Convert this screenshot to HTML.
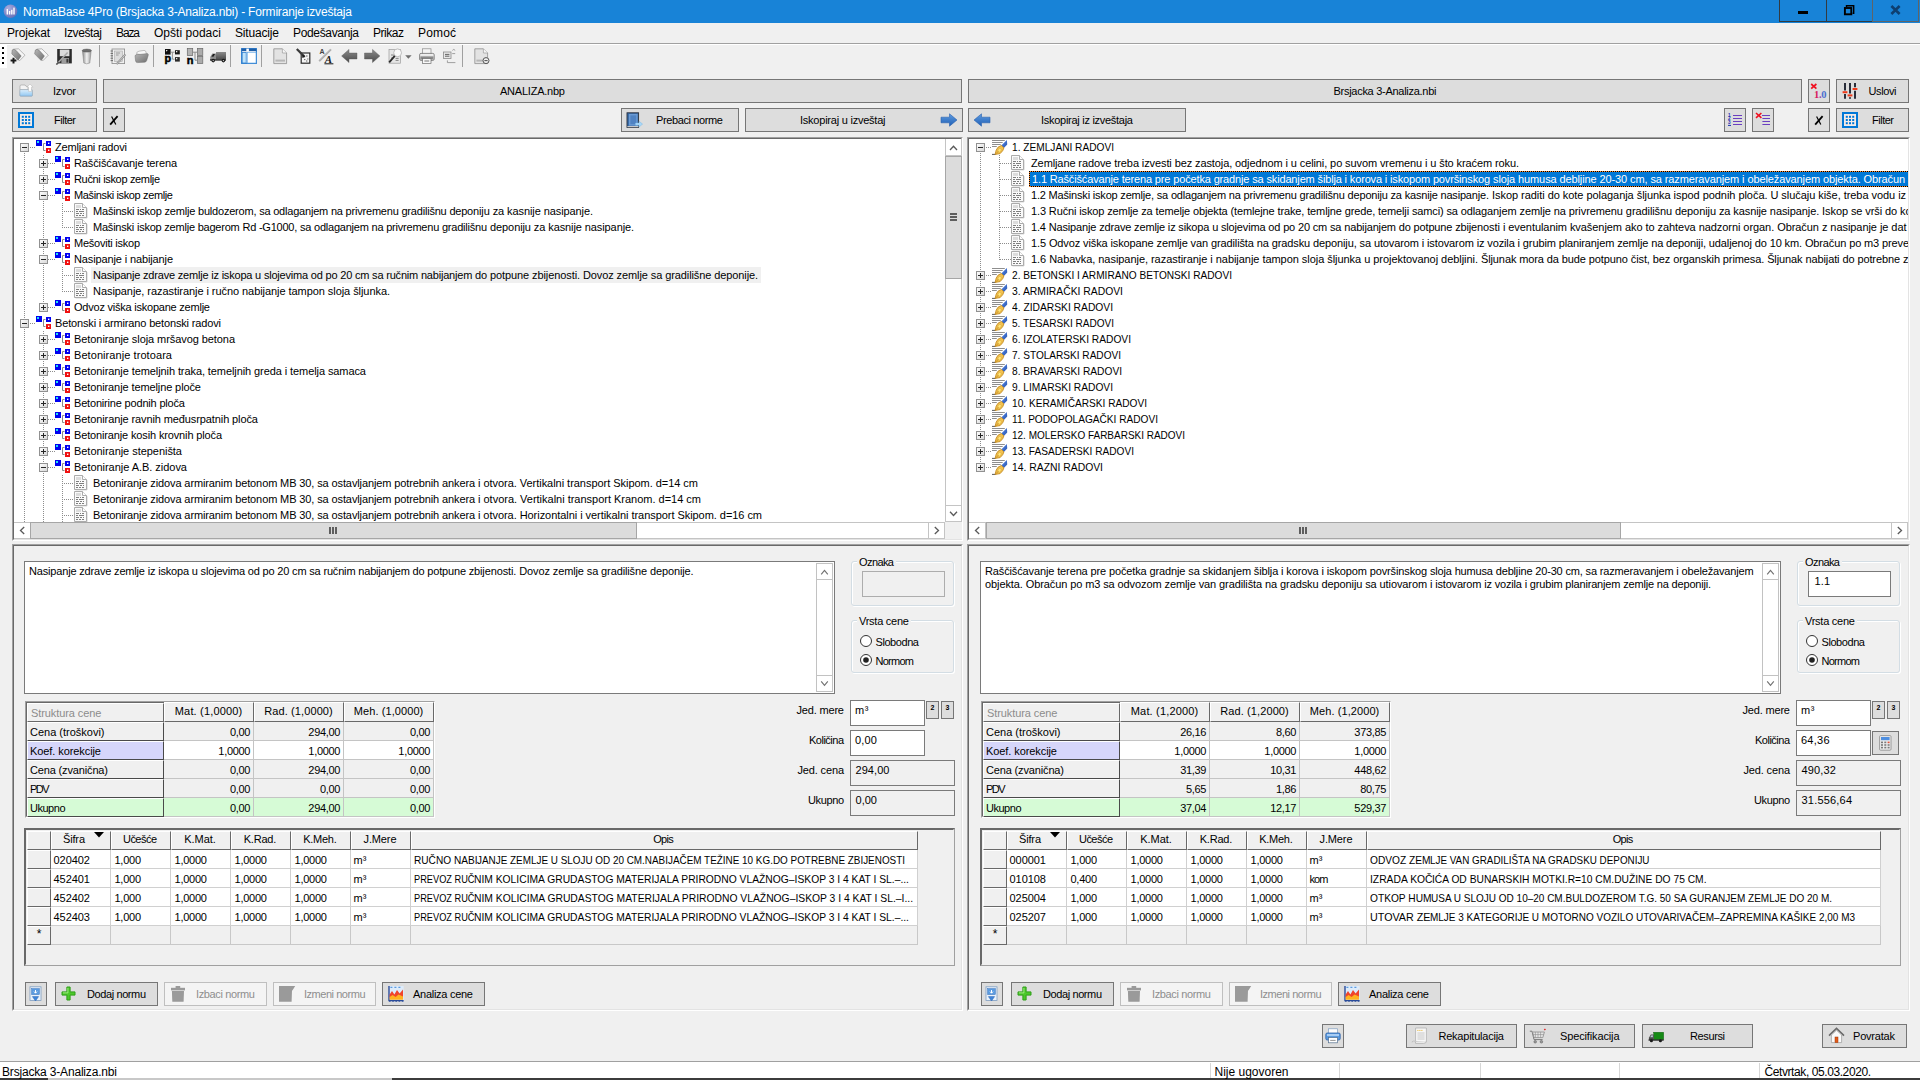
<!DOCTYPE html>
<html><head><meta charset="utf-8"><title>NormaBase 4Pro</title>
<style>
html,body{margin:0;padding:0;background:#F0F0F0;font-family:"Liberation Sans",sans-serif;}
body{width:1920px;height:1080px;overflow:hidden;font-family:"Liberation Sans",sans-serif;font-size:11px;color:#000;}
#root{position:relative;width:1920px;height:1080px;overflow:hidden;background:#F0F0F0;}
.a{position:absolute;box-sizing:border-box;}
.t{white-space:pre;overflow:visible;}
.btn{background:#DDDDDD;border:1px solid #767676;}
.btnd{background:#F4F4F4;border:1px solid #BFBFBF;}
.sunk{border-style:solid;border-width:2px;border-color:#828282 #fff #fff #828282;}
.clip{overflow:hidden;}
svg{position:absolute;overflow:visible;}

</style></head>
<body>
<svg width="0" height="0" style="position:absolute"><defs>
<linearGradient id="gbx" x1="0" y1="0" x2="1" y2="1"><stop offset="0" stop-color="#FFFFFF"/><stop offset="1" stop-color="#D6D6D6"/></linearGradient>
<g id="ifold">
 <rect x="0" y="1" width="6" height="6" fill="#0000F0"/><rect x="1" y="2" width="2" height="2" fill="#20E0F0"/>
 <path d="M9.5 4.5 H7.5 V11.5 H9.5" fill="none" stroke="#8A8A8A" stroke-width="1"/>
 <rect x="10" y="2" width="5" height="5" fill="#0000F0"/><rect x="12" y="3.6" width="1.4" height="1.4" fill="#fff"/>
 <rect x="10" y="9" width="5" height="5" fill="#F01010"/><rect x="12" y="10.6" width="1.4" height="1.4" fill="#fff"/>
</g>
<g id="idoc">
 <path d="M1.5 14.9 H13 V5.2" fill="none" stroke="#CFCFCF" stroke-width="1"/>
 <path d="M.5 .5 H8.5 L12.5 4.5 V14.5 H.5 Z" fill="#FAFAFA" stroke="#ABABAB" stroke-width="1"/>
 <path d="M8.5 .5 V4.5 H12.5" fill="#fff" stroke="#ABABAB" stroke-width="1"/>
 <rect x="2" y="2" width="5" height="3" fill="#DCDCDC"/>
 <path d="M2 6.5 H5 M6 6.5 H7 M8 6.5 H10 M2 8.5 H4 M5 8.5 H10 M2 10.5 H5 M6 10.5 H8 M9 10.5 H10 M2 12.5 H4 M5 12.5 H7 M8 12.5 H10" stroke="#7E7E7E" stroke-width="1" shape-rendering="crispEdges"/>
</g>
<g id="ipen">
 <path d="M0 1.5 H12.8 M0 3.5 H10.7 M0 5.5 H8.7 M0 7.5 H4.8" stroke="#8E8E8E" stroke-width="1"/>
 <path d="M0 15.4 H3.8" stroke="#5A5A5A" stroke-width="1"/>
 <path d="M14.9 1.1 L15.2 5.6 L11.9 9 L9.2 6.5 Z" fill="url(#gpen)"/>
 <path d="M9.3 6.5 L6 8.2 L4.2 11.2 L3.1 15.4 L8.1 14.6 L10.7 11.7 L11.9 8.9 Z" fill="#F2C252" stroke="#C48A1E" stroke-width=".9" stroke-linejoin="round"/>
 <ellipse cx="7.5" cy="11.3" rx="2.1" ry="1.5" transform="rotate(-48 7.5 11.3)" fill="#FFE67A" stroke="#D9A42E" stroke-width=".5"/>
 <path d="M3.6 14.9 L6.6 12.2" stroke="#B77F16" stroke-width=".6"/>
</g>
<linearGradient id="gpen" x1="0" y1="0" x2="1" y2="1"><stop offset="0" stop-color="#7FA6EC"/><stop offset=".5" stop-color="#3F6FCC"/><stop offset="1" stop-color="#2A54A8"/></linearGradient>
</defs></svg>

<div id="root">
<div class="a " style="left:0px;top:0px;width:1920px;height:23px;background:#1883D7;"></div>
<svg class="a" style="left:3px;top:4px" width="15" height="15" viewBox="0 0 15 15"><defs><radialGradient id="gi" cx="35%" cy="30%" r="75%"><stop offset="0" stop-color="#A9AEE0"/><stop offset="1" stop-color="#6670B8"/></radialGradient></defs><circle cx="7.5" cy="7.2" r="6.8" fill="url(#gi)"/><rect x="3.6" y="5" width="1.4" height="5.5" fill="#fff"/><rect x="5.9" y="7" width="1.4" height="3.5" fill="#fff"/><rect x="8.1" y="5.8" width="1.4" height="4.7" fill="#fff"/><rect x="10.3" y="3.6" width="1.4" height="6.9" fill="#fff"/></svg>
<div class="a t " style="left:23px;top:1px;font-size:12px;line-height:23px;height:23px;letter-spacing:-0.182px;color:#fff;">NormaBase 4Pro (Brsjacka 3-Analiza.nbi) - Formiranje izveštaja</div>
<div class="a " style="left:1779px;top:0px;width:48px;height:22px;border:1px solid #333A40;border-top:none;"></div>
<div class="a " style="left:1826px;top:0px;width:47px;height:22px;border:1px solid #333A40;border-top:none;"></div>
<div class="a " style="left:1872px;top:0px;width:47px;height:22px;border:1px solid #5F6468;border-top:none;"></div>
<div class="a " style="left:1798px;top:11px;width:10px;height:3px;background:#000;"></div>
<svg class="a" style="left:1843px;top:4px" width="13" height="13" viewBox="0 0 13 13"><path d="M3.5 3 V1.8 H10.7 V9.3 H9.6" fill="none" stroke="#000" stroke-width="1.4"/><rect x="1.9" y="4" width="6.4" height="6.3" fill="none" stroke="#000" stroke-width="1.9"/></svg>
<svg class="a" style="left:1890px;top:5px" width="11" height="10" viewBox="0 0 11 10"><path d="M1.4 1 L9.6 9 M9.6 1 L1.4 9" stroke="#0E3F70" stroke-width="2.6"/></svg>
<div class="a " style="left:0px;top:43px;width:1920px;height:1px;background:#A0A0A0;"></div>
<div class="a " style="left:0px;top:44px;width:1920px;height:1px;background:#fff;"></div>
<div class="a t " style="left:7px;top:23px;font-size:12px;line-height:20px;height:20px;letter-spacing:-0.147px;">Projekat</div>
<div class="a t " style="left:64px;top:23px;font-size:12px;line-height:20px;height:20px;letter-spacing:-0.384px;">Izveštaj</div>
<div class="a t " style="left:116px;top:23px;font-size:12px;line-height:20px;height:20px;letter-spacing:-1.12px;">Baza</div>
<div class="a t " style="left:154px;top:23px;font-size:12px;line-height:20px;height:20px;letter-spacing:0.027px;">Opšti podaci</div>
<div class="a t " style="left:235px;top:23px;font-size:12px;line-height:20px;height:20px;letter-spacing:-0.17px;">Situacije</div>
<div class="a t " style="left:293px;top:23px;font-size:12px;line-height:20px;height:20px;letter-spacing:-0.339px;">Podešavanja</div>
<div class="a t " style="left:373px;top:23px;font-size:12px;line-height:20px;height:20px;letter-spacing:-0.469px;">Prikaz</div>
<div class="a t " style="left:418px;top:23px;font-size:12px;line-height:20px;height:20px;letter-spacing:0.16px;">Pomoć</div>
<div class="a " style="left:0px;top:45px;width:7px;height:23px;background:#fff;"></div>
<div class="a " style="left:2px;top:47px;width:2px;height:2px;background:#000;"></div>
<div class="a " style="left:2px;top:52px;width:2px;height:2px;background:#000;"></div>
<div class="a " style="left:2px;top:57px;width:2px;height:2px;background:#000;"></div>
<div class="a " style="left:2px;top:62px;width:2px;height:2px;background:#000;"></div>
<div class="a " style="left:99px;top:45px;width:1px;height:22px;background:#A0A0A0;"></div>
<div class="a " style="left:153px;top:45px;width:1px;height:22px;background:#A0A0A0;"></div>
<div class="a " style="left:230px;top:45px;width:1px;height:22px;background:#A0A0A0;"></div>
<div class="a " style="left:261px;top:45px;width:1px;height:22px;background:#A0A0A0;"></div>
<div class="a " style="left:462px;top:45px;width:1px;height:22px;background:#A0A0A0;"></div>
<svg class="a" style="left:0;top:45px" width="500" height="23" viewBox="0 0 500 23">
<defs>
<linearGradient id="tg1" x1="0" y1="0" x2="1" y2="1"><stop offset="0" stop-color="#B8B8B8"/><stop offset="1" stop-color="#6E6E6E"/></linearGradient>
<linearGradient id="tg2" x1="0" y1="0" x2="1" y2="0"><stop offset="0" stop-color="#8A8A8A"/><stop offset=".5" stop-color="#F2F2F2"/><stop offset="1" stop-color="#9A9A9A"/></linearGradient>
<linearGradient id="tg3" x1="0" y1="0" x2="0" y2="1"><stop offset="0" stop-color="#8C8C8C"/><stop offset="1" stop-color="#4A4A4A"/></linearGradient>
<linearGradient id="tg4" x1="0" y1="0" x2="0" y2="1"><stop offset="0" stop-color="#F4F4F4"/><stop offset="1" stop-color="#CFCFCF"/></linearGradient>
</defs>
<!-- 1 tag+ -->
<g transform="translate(10,3)"><path d="M3.5 1.2 L8.5 0.8 L15 7.2 L9.5 12.8 L3 6.2 Z" fill="#F6F6F6" stroke="#9A9A9A" stroke-width=".7"/><path d="M2.2 2 Q3.6 0.2 6.2 2.6 L11.2 8 L8 12.2 L1.8 5.8 Z" fill="url(#tg1)" stroke="#6A6A6A" stroke-width=".5"/><path d="M0.6 12.6 H6.4 M3.5 9.8 V15.6" stroke="#1A1A1A" stroke-width="2"/></g>
<!-- 2 tag -->
<g transform="translate(33,3)"><path d="M3.8 1.2 L8.8 0.8 L15.3 7.2 L9.8 12.8 L3.3 6.2 Z" fill="#F6F6F6" stroke="#9A9A9A" stroke-width=".7"/><path d="M2.4 2 Q3.8 0.2 6.4 2.6 L11.4 8 L8.2 12.6 L1.6 5.8 Z" fill="url(#tg1)" stroke="#6A6A6A" stroke-width=".5"/></g>
<!-- 3 floppy -->
<g transform="translate(56,3)"><rect x="1.2" y="1" width="14.6" height="14.4" fill="#2B2B2B"/><rect x="3.8" y="1.6" width="9.6" height="6.6" fill="#DADADA"/><rect x="5.4" y="10" width="7.6" height="5.4" fill="#9C9C9C"/><rect x="10.4" y="10.8" width="2" height="3.8" fill="#3A3A3A"/><path d="M0.4 16.6 L11.6 4.4" stroke="#A8A8A8" stroke-width="1.5"/><path d="M0.4 16.6 L3 14" stroke="#555" stroke-width="1.4"/></g>
<!-- 4 trash -->
<g transform="translate(81,3)"><path d="M1.4 2.6 L2.8 15 Q5.6 16.6 8.8 15 L10.2 2.6 Z" fill="url(#tg2)" stroke="#7A7A7A" stroke-width=".5"/><ellipse cx="5.8" cy="2.6" rx="4.5" ry="1.5" fill="#6E6E6E" stroke="#555" stroke-width=".5"/></g>
<!-- 5 notepad -->
<g transform="translate(110,3)"><rect x="2" y="1" width="12.6" height="14.6" fill="#F0F0F0" stroke="#8A8A8A" stroke-width=".8"/><rect x="4.4" y="3" width="8" height="10.6" fill="#DCDCDC" stroke="#A0A0A0" stroke-width=".5"/><path d="M0.6 3 H3 M0.6 5.4 H3 M0.6 7.8 H3 M0.6 10.2 H3 M0.6 12.6 H3" stroke="#6A6A6A" stroke-width="1"/><path d="M6 5 H10 M6 7 H8.6" stroke="#8A8A8A" stroke-width=".8"/><path d="M6.6 16.2 L15.4 6.4" stroke="#8A8A8A" stroke-width="2"/><path d="M6.6 16.2 L15.4 6.4" stroke="#D6D6D6" stroke-width=".8"/></g>
<!-- 6 folder -->
<g transform="translate(134,4)"><path d="M2.6 5.4 Q2 2.6 5 2.2 L10 1.4 Q11.6 1.4 12 3 L12.6 6 Z" fill="#F8F8F8" stroke="#9A9A9A" stroke-width=".6"/><path d="M1 6.6 Q3 4.4 6 5.4 L13.4 4.6 Q14.6 4.8 14.2 6.4 L12.6 11.8 Q12 13.2 10.6 13.2 L3.4 13.6 Q2 13.6 1.6 12 Z" fill="url(#tg1)" stroke="#6E6E6E" stroke-width=".5"/></g>
<!-- 7 P-tree -->
<g transform="translate(164,3)"><rect x="1" y="1" width="5.6" height="5.6" fill="#111"/><path d="M2 3.8 V2 H3.8 Z" fill="#E8E8E8"/><rect x="11" y="2.2" width="4.8" height="4.2" fill="#161616"/><rect x="12" y="3" width="1.3" height="1.3" fill="#F0F0F0"/><rect x="11" y="9.1" width="4.8" height="4.5" fill="#2A2A2A"/><rect x="12" y="10" width="1.3" height="1.3" fill="#E0E0E0"/><path d="M10.6 4.2 H8.4 V11.2 H10.6 M6.8 4.2 H8.4" fill="none" stroke="#8A8A8A" stroke-width=".9"/><text x=".5" y="13.7" font-family="Liberation Sans" font-weight="bold" font-size="10.8" fill="#000" stroke="#000" stroke-width=".5">p</text></g>
<!-- 8 n -->
<g transform="translate(187,3)"><rect x=".3" y=".4" width="5.4" height="7.2" fill="#B4B4B4" stroke="#6A6A6A" stroke-width=".7"/><rect x="10.4" y=".4" width="5.4" height="7.2" fill="#ABABAB" stroke="#6A6A6A" stroke-width=".7"/><rect x="10.4" y="8.4" width="5.4" height="7.2" fill="#ABABAB" stroke="#6A6A6A" stroke-width=".7"/><path d="M5.8 4.2 H10.4 M8 4.2 V12.2 H10.4" fill="none" stroke="#8A8A8A" stroke-width="1"/><text x="-.3" y="15.7" font-family="Liberation Sans" font-weight="bold" font-size="11" fill="#000" stroke="#000" stroke-width=".5">n</text></g>
<!-- 9 truck -->
<g transform="translate(209,5)"><rect x="7" y="2" width="10" height="7.8" fill="url(#tg3)"/><path d="M1.2 10 V7 L3.4 3.6 H7 V10 Z" fill="#8C8C8C"/><path d="M2.4 6.6 L4.2 4 H6 L4.4 6.8 Z" fill="#1A1A1A"/><rect x="1" y="9.2" width="16" height="1.5" fill="#3A3A3A"/><circle cx="4.2" cy="10.6" r="1.8" fill="#1A1A1A"/><circle cx="4.2" cy="10.6" r=".7" fill="#CCC"/><circle cx="14.4" cy="10.6" r="1.8" fill="#1A1A1A"/><circle cx="14.4" cy="10.6" r=".7" fill="#CCC"/></g>
<!-- 10 layout -->
<g transform="translate(241,3)"><rect x=".6" y=".6" width="14.8" height="14.8" fill="#fff" stroke="#2F7FD0" stroke-width="1.1"/><rect x=".6" y=".6" width="14.8" height="2.6" fill="#1F5FA8"/><rect x="1.2" y="4.4" width="4" height="10.6" fill="#BFE3FA" stroke="#2F7FD0" stroke-width=".8"/><path d="M6.6 .6 V3.4" stroke="#fff" stroke-width="2.6"/><rect x="6.4" y="4.4" width="8.6" height="10.6" fill="#fff" stroke="#5FA6E4" stroke-width=".6"/></g>
<!-- 11 page -->
<g transform="translate(273,3)"><path d="M.8 .8 H9.4 L13.6 5 V15.6 H.8 Z" fill="#E3E3E3" stroke="#8E8E8E" stroke-width=".8"/><path d="M9.4 .8 V5 H13.6" fill="#F6F6F6" stroke="#8E8E8E" stroke-width=".6"/><rect x="2.4" y="11.6" width="9.6" height="2" fill="#B6B6B6"/></g>
<!-- 12 -->
<g transform="translate(296,3)"><rect x="5.2" y="5" width="8.6" height="10.2" fill="#F4F4F4" stroke="#2A2A2A" stroke-width="1.2"/><path d="M.8 1 L8.4 8.6" stroke="#3A3A3A" stroke-width="2.2"/><path d="M6 9.8 L9.6 9 L6.8 6.4Z" fill="#1A1A1A"/><path d="M10 8 h1.6 M8 11.6 h1.4 M11.2 11 h1.2 M10 13 h1.4" stroke="#555" stroke-width=".9"/></g>
<!-- 13 A/A -->
<g transform="translate(318,3)"><path d="M1.2 13.2 L13 1.4" stroke="#9A9A9A" stroke-width="1.8"/><path d="M1.2 13.2 L13 1.4" stroke="#E4E4E4" stroke-width=".6"/><text x="1.6" y="6.4" font-family="Liberation Sans" font-weight="bold" font-size="7" fill="#444">A</text><text x="6.8" y="14.6" font-family="Liberation Serif" font-style="italic" font-weight="bold" font-size="11" fill="#1A1A1A">A</text><path d="M6.4 15.8 H15.4" stroke="#1A1A1A" stroke-width="1"/></g>
<!-- 14 left arrow -->
<g transform="translate(341,3)"><path d="M.6 8 L8 1.4 V5 H16 V11 H8 V14.6 Z" fill="url(#tg3)" stroke="#555" stroke-width=".4"/></g>
<!-- 15 right arrow -->
<g transform="translate(363.5,3)"><path d="M16.4 8 L9 1.4 V5 H1 V11 H9 V14.6 Z" fill="url(#tg3)" stroke="#555" stroke-width=".4"/></g>
<!-- 16 zoom -->
<g transform="translate(388,3)"><rect x="1" y="1.6" width="11.4" height="13.6" fill="#E6E6E6" stroke="#9C9C9C" stroke-width=".7"/><path d="M3 7 h3 M3 10 h2 M7.6 12.4 h3 M7.6 10.4 h3" stroke="#7A7A7A" stroke-width=".9"/><circle cx="9.6" cy="4.8" r="3.9" fill="#FAFAFA" stroke="#BDBDBD" stroke-width="1"/><path d="M6.8 7.8 L1.2 14.4" stroke="#2A2A2A" stroke-width="1.8"/><path d="M17.2 7.2 H23.6 L20.4 10.8 Z" fill="#6E6E6E"/></g>
<!-- 17 printer -->
<g transform="translate(419,3)"><rect x="3.6" y=".8" width="8.4" height="5.6" fill="#F4F4F4" stroke="#8A8A8A" stroke-width=".7"/><rect x=".6" y="5.4" width="14.6" height="7" rx="1.4" fill="url(#tg4)" stroke="#6E6E6E" stroke-width=".8"/><rect x="1.4" y="8.4" width="13" height="3" fill="#8A8A8A"/><rect x="3.6" y="10.6" width="8.4" height="4.8" fill="#F8F8F8" stroke="#6E6E6E" stroke-width=".7"/><path d="M5.4 13 H10.2" stroke="#555" stroke-width=".8"/></g>
<!-- 18 small -->
<g transform="translate(442,4)"><rect x="1.4" y="3" width="7.6" height="6.4" fill="#E8E8E8" stroke="#8A8A8A" stroke-width=".8"/><path d="M3 5.4 h4.4 M3 7.2 h4.4" stroke="#555" stroke-width=".9"/><path d="M10.4 1.4 l1.4 -1 l1.4 1 M10.2 4.6 h3 M5.4 11.4 V13.6 H13.4" stroke="#8A8A8A" stroke-width=".8" fill="none"/></g>
<!-- 19 page circle -->
<g transform="translate(474,3)"><path d="M.8 .8 H9.4 L13.6 5 V15.6 H.8 Z" fill="#E3E3E3" stroke="#8E8E8E" stroke-width=".8"/><path d="M9.4 .8 V5 H13.6" fill="#F6F6F6" stroke="#8E8E8E" stroke-width=".6"/><rect x="2.4" y="11.6" width="7" height="2" fill="#B6B6B6"/><circle cx="12" cy="12.6" r="3" fill="#F0F0F0" stroke="#555" stroke-width="1"/><path d="M10.4 12.6 H13.6" stroke="#555" stroke-width="1.1"/></g>
</svg>

<div class="a btn" style="left:12px;top:79px;width:85px;height:24px;"></div>
<div class="a t " style="left:53px;top:79px;font-size:11px;line-height:24px;height:24px;letter-spacing:-0.211px;">Izvor</div>
<div class="a btn" style="left:103px;top:79px;width:859px;height:24px;"></div>
<div class="a t " style="left:500.0px;top:79px;font-size:11px;line-height:24px;height:24px;letter-spacing:-0.227px;">ANALIZA.nbp</div>
<div class="a btn" style="left:968px;top:79px;width:834px;height:24px;"></div>
<div class="a t " style="left:1333.5px;top:79px;font-size:11px;line-height:24px;height:24px;letter-spacing:-0.278px;">Brsjacka 3-Analiza.nbi</div>
<div class="a btn" style="left:1808px;top:79px;width:22px;height:24px;"></div>
<div class="a btn" style="left:1836px;top:79px;width:73px;height:24px;"></div>
<div class="a t " style="left:1868.5px;top:79px;font-size:11px;line-height:24px;height:24px;letter-spacing:-0.391px;">Uslovi</div>
<div class="a btn" style="left:12px;top:108px;width:85px;height:24px;"></div>
<div class="a t " style="left:54px;top:108px;font-size:11px;line-height:24px;height:24px;letter-spacing:-0.491px;">Filter</div>
<div class="a btn" style="left:103px;top:108px;width:22px;height:24px;"></div>
<div class="a btn" style="left:621px;top:108px;width:118px;height:24px;"></div>
<div class="a t " style="left:656px;top:108px;font-size:11px;line-height:24px;height:24px;letter-spacing:-0.379px;">Prebaci norme</div>
<div class="a btn" style="left:745px;top:108px;width:218px;height:24px;"></div>
<div class="a t " style="left:800px;top:108px;font-size:11px;line-height:24px;height:24px;letter-spacing:-0.23px;">Iskopiraj u izveštaj</div>
<div class="a btn" style="left:968px;top:108px;width:218px;height:24px;"></div>
<div class="a t " style="left:1041px;top:108px;font-size:11px;line-height:24px;height:24px;letter-spacing:-0.278px;">Iskopiraj iz izveštaja</div>
<div class="a btn" style="left:1724px;top:108px;width:22px;height:24px;"></div>
<div class="a btn" style="left:1752px;top:108px;width:22px;height:24px;"></div>
<div class="a btn" style="left:1808px;top:108px;width:22px;height:24px;"></div>
<div class="a btn" style="left:1836px;top:108px;width:73px;height:24px;"></div>
<div class="a t " style="left:1872px;top:108px;font-size:11px;line-height:24px;height:24px;letter-spacing:-0.491px;">Filter</div>
<svg class="a" style="left:109px;top:115px" width="10" height="11" viewBox="0 0 10 11"><path d="M1.2 9.6 L8.6 1.2" stroke="#000" stroke-width="1.8"/><path d="M2.6 1.4 L6.8 9.6" stroke="#000" stroke-width="1.2"/></svg>
<svg class="a" style="left:1814px;top:115px" width="10" height="11" viewBox="0 0 10 11"><path d="M1.2 9.6 L8.6 1.2" stroke="#000" stroke-width="1.8"/><path d="M2.6 1.4 L6.8 9.6" stroke="#000" stroke-width="1.2"/></svg>
<svg class="a" style="left:18px;top:112px" width="16" height="16" viewBox="0 0 16 16"><rect x="1" y="1" width="14" height="14" fill="#F3EAE6" stroke="#0078D7" stroke-width="2"/><rect x="3.8" y="3.8" width="2" height="2" fill="#0078D7"/><rect x="3.8" y="7" width="2" height="2" fill="#0078D7"/><rect x="3.8" y="10.2" width="2" height="2" fill="#0078D7"/><rect x="7" y="3.8" width="2" height="2" fill="#0078D7"/><rect x="7" y="7" width="2" height="2" fill="#0078D7"/><rect x="7" y="10.2" width="2" height="2" fill="#0078D7"/><rect x="10.2" y="3.8" width="2" height="2" fill="#0078D7"/><rect x="10.2" y="7" width="2" height="2" fill="#0078D7"/><rect x="10.2" y="10.2" width="2" height="2" fill="#0078D7"/></svg>
<svg class="a" style="left:1842px;top:112px" width="16" height="16" viewBox="0 0 16 16"><rect x="1" y="1" width="14" height="14" fill="#F3EAE6" stroke="#0078D7" stroke-width="2"/><rect x="3.8" y="3.8" width="2" height="2" fill="#0078D7"/><rect x="3.8" y="7" width="2" height="2" fill="#0078D7"/><rect x="3.8" y="10.2" width="2" height="2" fill="#0078D7"/><rect x="7" y="3.8" width="2" height="2" fill="#0078D7"/><rect x="7" y="7" width="2" height="2" fill="#0078D7"/><rect x="7" y="10.2" width="2" height="2" fill="#0078D7"/><rect x="10.2" y="3.8" width="2" height="2" fill="#0078D7"/><rect x="10.2" y="7" width="2" height="2" fill="#0078D7"/><rect x="10.2" y="10.2" width="2" height="2" fill="#0078D7"/></svg>
<svg class="a" style="left:19px;top:83px" width="15" height="15" viewBox="0 0 15 15"><defs><linearGradient id="gf" x1="0" y1="0" x2="0" y2="1"><stop offset="0" stop-color="#DDEFFC"/><stop offset="1" stop-color="#8FC6F2"/></linearGradient></defs><path d="M1 3.2 Q1 2 2.2 2 H6 L7.2 3.4 H9 V7 H1 Z" fill="#F4F4F4" stroke="#9A9A9A" stroke-width=".6"/><rect x=".8" y="6.6" width="12.6" height="6.6" rx=".8" fill="url(#gf)" stroke="#8A9AA8" stroke-width=".6"/><path d="M11 1 L14 4.2 H12.4 V8.4 H9.6 V4.2 H8 Z" fill="#fff" stroke="#B5B5B5" stroke-width=".5"/></svg>
<svg class="a" style="left:940px;top:113px" width="18" height="14" viewBox="0 0 18 14"><defs><linearGradient id="ga" x1="0" y1="0" x2="0" y2="1"><stop offset="0" stop-color="#5E9BE0"/><stop offset="1" stop-color="#1F5FB5"/></linearGradient></defs><path d="M1 4.2 H9.5 V.8 L17 7 L9.5 13.2 V9.8 H1 Z" fill="url(#ga)" stroke="#2A62B0" stroke-width=".6"/></svg>
<svg class="a" style="left:973px;top:113px" width="18" height="14" viewBox="0 0 18 14"><path d="M17 4.2 H8.5 V.8 L1 7 L8.5 13.2 V9.8 H17 Z" fill="url(#ga)" stroke="#2A62B0" stroke-width=".6"/></svg>
<svg class="a" style="left:626px;top:112px" width="18" height="17" viewBox="0 0 18 17"><rect x="1" y=".8" width="11.6" height="14.6" fill="#3A6CA8" stroke="#2A2F3A" stroke-width=".9"/><rect x="3" y="2" width="8.6" height="11.6" fill="#6A9AD4"/><rect x="4.4" y="3.4" width="5.8" height="8.8" fill="#4F82C2"/><path d="M1.4 14.6 H12.4" stroke="#C8C8C8" stroke-width="1.2"/><path d="M9.4 11 h3.6 v-1.8 l3.6 2.9 l-3.6 2.9 v-1.8 h-3.6z" fill="#A8D8F8" stroke="#6FB0E4" stroke-width=".4"/></svg>
<svg class="a" style="left:1810px;top:82px" width="18" height="18" viewBox="0 0 18 18"><path d="M1.2 2 L6.4 6.6 M6.4 2 L1.2 6.6" stroke="#F01020" stroke-width="1.7"/><text x="4" y="15.6" font-family="Liberation Serif" font-weight="bold" font-size="10.5" fill="#D81B60">1</text><text x="9" y="15.6" font-family="Liberation Serif" font-weight="bold" font-size="10.5" fill="#8E44AD">.</text><text x="11.2" y="15.6" font-family="Liberation Serif" font-weight="bold" font-size="10.5" fill="#4A6FD0">0</text></svg>
<svg class="a" style="left:1842px;top:82px" width="16" height="18" viewBox="0 0 16 18"><g stroke="#2A2E3A" stroke-width="2"><path d="M3 1 V8.4 M3 12 V16.8"/><path d="M8 1 V11.6 M8 15.2 V16.8"/><path d="M13 1 V5.2 M13 8.8 V16.8"/></g><g fill="#F03A1A"><rect x=".6" y="9.2" width="4.8" height="2"/><rect x="5.6" y="12.4" width="4.8" height="2"/><rect x="10.6" y="6" width="4.8" height="2"/></g></svg>
<svg class="a" style="left:1726px;top:111px" width="18" height="18" viewBox="0 0 18 18"><g stroke="#6A3FC0" stroke-width="1"><path d="M7 4.5 H16 M7 7.5 H16 M7 10.5 H16 M7 13.5 H16"/></g><g fill="#1A2FB0" font-family="Liberation Sans" font-size="4.6" font-weight="bold"><text x="2" y="5.6">1</text><text x="2" y="9.4">2</text><text x="2" y="13.2">3</text></g><path d="M2 14.4 h3" stroke="#1A2FB0" stroke-width="1"/></svg>
<svg class="a" style="left:1754px;top:111px" width="18" height="18" viewBox="0 0 18 18"><path d="M2 2 L7.4 6.8 M7.4 2 L2 6.8" stroke="#F01020" stroke-width="1.6"/><g stroke="#6A3FC0" stroke-width="1"><path d="M8 4.5 H16 M8.4 7.5 H16 M8.4 10.5 H16 M8.4 13.5 H16"/></g></svg>
<div class="a " style="left:12px;top:137px;width:951px;height:404px;background:#fff;border-style:solid;border-width:1px;border-color:#A0A0A0 #fff #fff #A0A0A0;"></div>
<div class="a " style="left:13px;top:138px;width:949px;height:402px;border-style:solid;border-width:1px;border-color:#696969 #E3E3E3 #E3E3E3 #696969;"></div>
<div class="a clip" style="left:14px;top:139px;width:931px;height:383px;">
<div class="a " style="left:10px;top:14px;width:1px;height:166px;background:repeating-linear-gradient(to bottom,#8C8C8C 0 1px,transparent 1px 2px);"></div>
<div class="a " style="left:10px;top:190px;width:1px;height:194px;background:repeating-linear-gradient(to bottom,#8C8C8C 0 1px,transparent 1px 2px);"></div>
<div class="a " style="left:29px;top:16px;width:1px;height:148px;background:repeating-linear-gradient(to bottom,#8C8C8C 0 1px,transparent 1px 2px);"></div>
<div class="a " style="left:29px;top:192px;width:1px;height:192px;background:repeating-linear-gradient(to bottom,#8C8C8C 0 1px,transparent 1px 2px);"></div>
<div class="a " style="left:48px;top:64px;width:1px;height:25px;background:repeating-linear-gradient(to bottom,#8C8C8C 0 1px,transparent 1px 2px);"></div>
<div class="a " style="left:48px;top:128px;width:1px;height:25px;background:repeating-linear-gradient(to bottom,#8C8C8C 0 1px,transparent 1px 2px);"></div>
<div class="a " style="left:48px;top:336px;width:1px;height:48px;background:repeating-linear-gradient(to bottom,#8C8C8C 0 1px,transparent 1px 2px);"></div>
<div class="a " style="left:77px;top:128px;width:670px;height:16px;background:#F0F0F0;"></div>
<div class="a " style="left:16px;top:8px;width:6px;height:1px;background:repeating-linear-gradient(to right,#8C8C8C 0 1px,transparent 1px 2px);"></div>
<svg class="a" style="left:6px;top:4px" width="9" height="9" viewBox="0 0 9 9"><defs></defs><rect x=".5" y=".5" width="8" height="8" fill="url(#gbx)" stroke="#919191"/><path d="M2 4.5 H7" stroke="#262626" stroke-width="1"/></svg>
<svg class="a" style="left:22px;top:0px" width="16" height="16"><use href="#ifold"/></svg>
<div class="a t " style="left:41px;top:0px;font-size:11px;line-height:16px;height:16px;letter-spacing:-0.185px;">Zemljani radovi</div>
<div class="a " style="left:34px;top:24px;width:7px;height:1px;background:repeating-linear-gradient(to right,#8C8C8C 0 1px,transparent 1px 2px);"></div>
<svg class="a" style="left:25px;top:20px" width="9" height="9" viewBox="0 0 9 9"><defs></defs><rect x=".5" y=".5" width="8" height="8" fill="url(#gbx)" stroke="#919191"/><path d="M2 4.5 H7" stroke="#262626" stroke-width="1"/><path d="M4.5 2 V7" stroke="#262626" stroke-width="1"/></svg>
<svg class="a" style="left:41px;top:16px" width="16" height="16"><use href="#ifold"/></svg>
<div class="a t " style="left:60px;top:16px;font-size:11px;line-height:16px;height:16px;letter-spacing:-0.114px;">Raščišćavanje terena</div>
<div class="a " style="left:34px;top:40px;width:7px;height:1px;background:repeating-linear-gradient(to right,#8C8C8C 0 1px,transparent 1px 2px);"></div>
<svg class="a" style="left:25px;top:36px" width="9" height="9" viewBox="0 0 9 9"><defs></defs><rect x=".5" y=".5" width="8" height="8" fill="url(#gbx)" stroke="#919191"/><path d="M2 4.5 H7" stroke="#262626" stroke-width="1"/><path d="M4.5 2 V7" stroke="#262626" stroke-width="1"/></svg>
<svg class="a" style="left:41px;top:32px" width="16" height="16"><use href="#ifold"/></svg>
<div class="a t " style="left:60px;top:32px;font-size:11px;line-height:16px;height:16px;letter-spacing:-0.335px;">Ručni iskop zemlje</div>
<div class="a " style="left:34px;top:56px;width:7px;height:1px;background:repeating-linear-gradient(to right,#8C8C8C 0 1px,transparent 1px 2px);"></div>
<svg class="a" style="left:25px;top:52px" width="9" height="9" viewBox="0 0 9 9"><defs></defs><rect x=".5" y=".5" width="8" height="8" fill="url(#gbx)" stroke="#919191"/><path d="M2 4.5 H7" stroke="#262626" stroke-width="1"/></svg>
<svg class="a" style="left:41px;top:48px" width="16" height="16"><use href="#ifold"/></svg>
<div class="a t " style="left:60px;top:48px;font-size:11px;line-height:16px;height:16px;letter-spacing:-0.369px;">Mašinski iskop zemlje</div>
<div class="a " style="left:50px;top:72px;width:10px;height:1px;background:repeating-linear-gradient(to right,#8C8C8C 0 1px,transparent 1px 2px);"></div>
<svg class="a" style="left:60px;top:64px" width="14" height="16"><use href="#idoc"/></svg>
<div class="a t" style="left:79px;top:64px;font-size:11px;line-height:16px;height:16px;"><span style="letter-spacing:-0.202px">Mašinski iskop zemlje buldozerom, sa odlaganjem na privremenu gradilišnu depon</span><span style="letter-spacing:-0.087px">iju za kasnije nasipanje.</span></div>
<div class="a " style="left:50px;top:88px;width:10px;height:1px;background:repeating-linear-gradient(to right,#8C8C8C 0 1px,transparent 1px 2px);"></div>
<svg class="a" style="left:60px;top:80px" width="14" height="16"><use href="#idoc"/></svg>
<div class="a t" style="left:79px;top:80px;font-size:11px;line-height:16px;height:16px;"><span style="letter-spacing:-0.216px">Mašinski iskop zemlje bagerom Rd -G1000, sa odlaganjem na privremenu gradiliš</span><span style="letter-spacing:-0.093px">nu deponiju za kasnije nasipanje.</span></div>
<div class="a " style="left:34px;top:104px;width:7px;height:1px;background:repeating-linear-gradient(to right,#8C8C8C 0 1px,transparent 1px 2px);"></div>
<svg class="a" style="left:25px;top:100px" width="9" height="9" viewBox="0 0 9 9"><defs></defs><rect x=".5" y=".5" width="8" height="8" fill="url(#gbx)" stroke="#919191"/><path d="M2 4.5 H7" stroke="#262626" stroke-width="1"/><path d="M4.5 2 V7" stroke="#262626" stroke-width="1"/></svg>
<svg class="a" style="left:41px;top:96px" width="16" height="16"><use href="#ifold"/></svg>
<div class="a t " style="left:60px;top:96px;font-size:11px;line-height:16px;height:16px;letter-spacing:-0.237px;">Mešoviti iskop</div>
<div class="a " style="left:34px;top:120px;width:7px;height:1px;background:repeating-linear-gradient(to right,#8C8C8C 0 1px,transparent 1px 2px);"></div>
<svg class="a" style="left:25px;top:116px" width="9" height="9" viewBox="0 0 9 9"><defs></defs><rect x=".5" y=".5" width="8" height="8" fill="url(#gbx)" stroke="#919191"/><path d="M2 4.5 H7" stroke="#262626" stroke-width="1"/></svg>
<svg class="a" style="left:41px;top:112px" width="16" height="16"><use href="#ifold"/></svg>
<div class="a t " style="left:60px;top:112px;font-size:11px;line-height:16px;height:16px;letter-spacing:-0.126px;">Nasipanje i nabijanje</div>
<div class="a " style="left:50px;top:136px;width:10px;height:1px;background:repeating-linear-gradient(to right,#8C8C8C 0 1px,transparent 1px 2px);"></div>
<svg class="a" style="left:60px;top:128px" width="14" height="16"><use href="#idoc"/></svg>
<div class="a t" style="left:79px;top:128px;font-size:11px;line-height:16px;height:16px;"><span style="letter-spacing:-0.195px">Nasipanje zdrave zemlje iz iskopa u slojevima od po 20 cm sa ručnim nabijanjem </span><span style="letter-spacing:-0.095px">do potpune zbijenosti. Dovoz zemlje sa gradilišne deponije.</span></div>
<div class="a " style="left:50px;top:152px;width:10px;height:1px;background:repeating-linear-gradient(to right,#8C8C8C 0 1px,transparent 1px 2px);"></div>
<svg class="a" style="left:60px;top:144px" width="14" height="16"><use href="#idoc"/></svg>
<div class="a t " style="left:79px;top:144px;font-size:11px;line-height:16px;height:16px;letter-spacing:-0.062px;">Nasipanje, razastiranje i ručno nabijanje tampon sloja šljunka.</div>
<div class="a " style="left:34px;top:168px;width:7px;height:1px;background:repeating-linear-gradient(to right,#8C8C8C 0 1px,transparent 1px 2px);"></div>
<svg class="a" style="left:25px;top:164px" width="9" height="9" viewBox="0 0 9 9"><defs></defs><rect x=".5" y=".5" width="8" height="8" fill="url(#gbx)" stroke="#919191"/><path d="M2 4.5 H7" stroke="#262626" stroke-width="1"/><path d="M4.5 2 V7" stroke="#262626" stroke-width="1"/></svg>
<svg class="a" style="left:41px;top:160px" width="16" height="16"><use href="#ifold"/></svg>
<div class="a t " style="left:60px;top:160px;font-size:11px;line-height:16px;height:16px;letter-spacing:-0.225px;">Odvoz viška iskopane zemlje</div>
<div class="a " style="left:16px;top:184px;width:6px;height:1px;background:repeating-linear-gradient(to right,#8C8C8C 0 1px,transparent 1px 2px);"></div>
<svg class="a" style="left:6px;top:180px" width="9" height="9" viewBox="0 0 9 9"><defs></defs><rect x=".5" y=".5" width="8" height="8" fill="url(#gbx)" stroke="#919191"/><path d="M2 4.5 H7" stroke="#262626" stroke-width="1"/></svg>
<svg class="a" style="left:22px;top:176px" width="16" height="16"><use href="#ifold"/></svg>
<div class="a t " style="left:41px;top:176px;font-size:11px;line-height:16px;height:16px;letter-spacing:-0.153px;">Betonski i armirano betonski radovi</div>
<div class="a " style="left:34px;top:200px;width:7px;height:1px;background:repeating-linear-gradient(to right,#8C8C8C 0 1px,transparent 1px 2px);"></div>
<svg class="a" style="left:25px;top:196px" width="9" height="9" viewBox="0 0 9 9"><defs></defs><rect x=".5" y=".5" width="8" height="8" fill="url(#gbx)" stroke="#919191"/><path d="M2 4.5 H7" stroke="#262626" stroke-width="1"/><path d="M4.5 2 V7" stroke="#262626" stroke-width="1"/></svg>
<svg class="a" style="left:41px;top:192px" width="16" height="16"><use href="#ifold"/></svg>
<div class="a t " style="left:60px;top:192px;font-size:11px;line-height:16px;height:16px;letter-spacing:-0.073px;">Betoniranje sloja mršavog betona</div>
<div class="a " style="left:34px;top:216px;width:7px;height:1px;background:repeating-linear-gradient(to right,#8C8C8C 0 1px,transparent 1px 2px);"></div>
<svg class="a" style="left:25px;top:212px" width="9" height="9" viewBox="0 0 9 9"><defs></defs><rect x=".5" y=".5" width="8" height="8" fill="url(#gbx)" stroke="#919191"/><path d="M2 4.5 H7" stroke="#262626" stroke-width="1"/><path d="M4.5 2 V7" stroke="#262626" stroke-width="1"/></svg>
<svg class="a" style="left:41px;top:208px" width="16" height="16"><use href="#ifold"/></svg>
<div class="a t " style="left:60px;top:208px;font-size:11px;line-height:16px;height:16px;letter-spacing:0.072px;">Betoniranje trotoara</div>
<div class="a " style="left:34px;top:232px;width:7px;height:1px;background:repeating-linear-gradient(to right,#8C8C8C 0 1px,transparent 1px 2px);"></div>
<svg class="a" style="left:25px;top:228px" width="9" height="9" viewBox="0 0 9 9"><defs></defs><rect x=".5" y=".5" width="8" height="8" fill="url(#gbx)" stroke="#919191"/><path d="M2 4.5 H7" stroke="#262626" stroke-width="1"/><path d="M4.5 2 V7" stroke="#262626" stroke-width="1"/></svg>
<svg class="a" style="left:41px;top:224px" width="16" height="16"><use href="#ifold"/></svg>
<div class="a t " style="left:60px;top:224px;font-size:11px;line-height:16px;height:16px;letter-spacing:-0.086px;">Betoniranje temeljnih traka, temeljnih greda i temelja samaca</div>
<div class="a " style="left:34px;top:248px;width:7px;height:1px;background:repeating-linear-gradient(to right,#8C8C8C 0 1px,transparent 1px 2px);"></div>
<svg class="a" style="left:25px;top:244px" width="9" height="9" viewBox="0 0 9 9"><defs></defs><rect x=".5" y=".5" width="8" height="8" fill="url(#gbx)" stroke="#919191"/><path d="M2 4.5 H7" stroke="#262626" stroke-width="1"/><path d="M4.5 2 V7" stroke="#262626" stroke-width="1"/></svg>
<svg class="a" style="left:41px;top:240px" width="16" height="16"><use href="#ifold"/></svg>
<div class="a t " style="left:60px;top:240px;font-size:11px;line-height:16px;height:16px;letter-spacing:-0.106px;">Betoniranje temeljne ploče</div>
<div class="a " style="left:34px;top:264px;width:7px;height:1px;background:repeating-linear-gradient(to right,#8C8C8C 0 1px,transparent 1px 2px);"></div>
<svg class="a" style="left:25px;top:260px" width="9" height="9" viewBox="0 0 9 9"><defs></defs><rect x=".5" y=".5" width="8" height="8" fill="url(#gbx)" stroke="#919191"/><path d="M2 4.5 H7" stroke="#262626" stroke-width="1"/><path d="M4.5 2 V7" stroke="#262626" stroke-width="1"/></svg>
<svg class="a" style="left:41px;top:256px" width="16" height="16"><use href="#ifold"/></svg>
<div class="a t " style="left:60px;top:256px;font-size:11px;line-height:16px;height:16px;letter-spacing:-0.181px;">Betonirine podnih ploča</div>
<div class="a " style="left:34px;top:280px;width:7px;height:1px;background:repeating-linear-gradient(to right,#8C8C8C 0 1px,transparent 1px 2px);"></div>
<svg class="a" style="left:25px;top:276px" width="9" height="9" viewBox="0 0 9 9"><defs></defs><rect x=".5" y=".5" width="8" height="8" fill="url(#gbx)" stroke="#919191"/><path d="M2 4.5 H7" stroke="#262626" stroke-width="1"/><path d="M4.5 2 V7" stroke="#262626" stroke-width="1"/></svg>
<svg class="a" style="left:41px;top:272px" width="16" height="16"><use href="#ifold"/></svg>
<div class="a t " style="left:60px;top:272px;font-size:11px;line-height:16px;height:16px;letter-spacing:-0.104px;">Betoniranje ravnih međusrpatnih ploča</div>
<div class="a " style="left:34px;top:296px;width:7px;height:1px;background:repeating-linear-gradient(to right,#8C8C8C 0 1px,transparent 1px 2px);"></div>
<svg class="a" style="left:25px;top:292px" width="9" height="9" viewBox="0 0 9 9"><defs></defs><rect x=".5" y=".5" width="8" height="8" fill="url(#gbx)" stroke="#919191"/><path d="M2 4.5 H7" stroke="#262626" stroke-width="1"/><path d="M4.5 2 V7" stroke="#262626" stroke-width="1"/></svg>
<svg class="a" style="left:41px;top:288px" width="16" height="16"><use href="#ifold"/></svg>
<div class="a t " style="left:60px;top:288px;font-size:11px;line-height:16px;height:16px;letter-spacing:-0.142px;">Betoniranje kosih krovnih ploča</div>
<div class="a " style="left:34px;top:312px;width:7px;height:1px;background:repeating-linear-gradient(to right,#8C8C8C 0 1px,transparent 1px 2px);"></div>
<svg class="a" style="left:25px;top:308px" width="9" height="9" viewBox="0 0 9 9"><defs></defs><rect x=".5" y=".5" width="8" height="8" fill="url(#gbx)" stroke="#919191"/><path d="M2 4.5 H7" stroke="#262626" stroke-width="1"/><path d="M4.5 2 V7" stroke="#262626" stroke-width="1"/></svg>
<svg class="a" style="left:41px;top:304px" width="16" height="16"><use href="#ifold"/></svg>
<div class="a t " style="left:60px;top:304px;font-size:11px;line-height:16px;height:16px;letter-spacing:-0.041px;">Betoniranje stepeništa</div>
<div class="a " style="left:34px;top:328px;width:7px;height:1px;background:repeating-linear-gradient(to right,#8C8C8C 0 1px,transparent 1px 2px);"></div>
<svg class="a" style="left:25px;top:324px" width="9" height="9" viewBox="0 0 9 9"><defs></defs><rect x=".5" y=".5" width="8" height="8" fill="url(#gbx)" stroke="#919191"/><path d="M2 4.5 H7" stroke="#262626" stroke-width="1"/></svg>
<svg class="a" style="left:41px;top:320px" width="16" height="16"><use href="#ifold"/></svg>
<div class="a t " style="left:60px;top:320px;font-size:11px;line-height:16px;height:16px;letter-spacing:-0.034px;">Betoniranje A.B. zidova</div>
<div class="a " style="left:50px;top:344px;width:10px;height:1px;background:repeating-linear-gradient(to right,#8C8C8C 0 1px,transparent 1px 2px);"></div>
<svg class="a" style="left:60px;top:336px" width="14" height="16"><use href="#idoc"/></svg>
<div class="a t" style="left:79px;top:336px;font-size:11px;line-height:16px;height:16px;"><span style="letter-spacing:-0.115px">Betoniranje zidova armiranim betonom MB 30, sa ostavljanjem potrebnih ankera</span><span style="letter-spacing:-0.036px"> i otvora. Vertikalni transport Skipom. d=14 cm</span></div>
<div class="a " style="left:50px;top:360px;width:10px;height:1px;background:repeating-linear-gradient(to right,#8C8C8C 0 1px,transparent 1px 2px);"></div>
<svg class="a" style="left:60px;top:352px" width="14" height="16"><use href="#idoc"/></svg>
<div class="a t" style="left:79px;top:352px;font-size:11px;line-height:16px;height:16px;"><span style="letter-spacing:-0.115px">Betoniranje zidova armiranim betonom MB 30, sa ostavljanjem potrebnih ankera</span><span style="letter-spacing:-0.011px"> i otvora. Vertikalni transport Kranom. d=14 cm</span></div>
<div class="a " style="left:50px;top:376px;width:10px;height:1px;background:repeating-linear-gradient(to right,#8C8C8C 0 1px,transparent 1px 2px);"></div>
<svg class="a" style="left:60px;top:368px" width="14" height="16"><use href="#idoc"/></svg>
<div class="a t" style="left:79px;top:368px;font-size:11px;line-height:16px;height:16px;"><span style="letter-spacing:-0.115px">Betoniranje zidova armiranim betonom MB 30, sa ostavljanjem potrebnih ankera</span><span style="letter-spacing:-0.05px"> i otvora. Horizontalni i vertikalni transport Skipom. d=16 cm</span></div>
</div>
<div class="a " style="left:945px;top:139px;width:17px;height:383px;background:#fff;border:1px solid #C4C4C4;border-top:none;"></div>
<div class="a " style="left:945px;top:139px;width:17px;height:17px;border:1px solid #C4C4C4;border-top:none;"></div>
<div class="a " style="left:945px;top:505px;width:17px;height:17px;border:1px solid #C4C4C4;"></div>
<svg class="a" style="left:945px;top:139px" width="17" height="17"><path d="M5 11 L8.5 7.3 L12 11" fill="none" stroke="#5A5A5A" stroke-width="1.3"/></svg>
<svg class="a" style="left:945px;top:505px" width="17" height="17"><path d="M5 6.8 L8.5 10.5 L12 6.8" fill="none" stroke="#5A5A5A" stroke-width="1.3"/></svg>
<div class="a " style="left:945px;top:156px;width:17px;height:123px;background:#DCDCDC;border:1px solid #A6A6A6;"></div>
<div class="a " style="left:950px;top:213px;width:7px;height:2px;background:#5E5E5E;"></div>
<div class="a " style="left:950px;top:216px;width:7px;height:2px;background:#5E5E5E;"></div>
<div class="a " style="left:950px;top:219px;width:7px;height:2px;background:#5E5E5E;"></div>
<div class="a " style="left:14px;top:522px;width:931px;height:17px;background:#fff;border:1px solid #C4C4C4;border-left:none;"></div>
<div class="a " style="left:14px;top:522px;width:17px;height:17px;border:1px solid #C4C4C4;border-left:none;"></div>
<div class="a " style="left:928px;top:522px;width:17px;height:17px;border:1px solid #C4C4C4;"></div>
<svg class="a" style="left:14px;top:522px" width="17" height="17"><path d="M10.2 5 L6.5 8.5 L10.2 12" fill="none" stroke="#5A5A5A" stroke-width="1.3"/></svg>
<svg class="a" style="left:928px;top:522px" width="17" height="17"><path d="M6.8 5 L10.5 8.5 L6.8 12" fill="none" stroke="#5A5A5A" stroke-width="1.3"/></svg>
<div class="a " style="left:30px;top:522px;width:607px;height:17px;background:#DCDCDC;border:1px solid #A6A6A6;"></div>
<div class="a " style="left:329px;top:527px;width:2px;height:7px;background:#5E5E5E;"></div>
<div class="a " style="left:332px;top:527px;width:2px;height:7px;background:#5E5E5E;"></div>
<div class="a " style="left:335px;top:527px;width:2px;height:7px;background:#5E5E5E;"></div>
<div class="a " style="left:945px;top:522px;width:17px;height:17px;background:#F0F0F0;"></div>
<div class="a " style="left:967px;top:137px;width:943px;height:404px;background:#fff;border-style:solid;border-width:1px;border-color:#A0A0A0 #fff #fff #A0A0A0;"></div>
<div class="a " style="left:968px;top:138px;width:941px;height:402px;border-style:solid;border-width:1px;border-color:#696969 #E3E3E3 #E3E3E3 #696969;"></div>
<div class="a clip" style="left:970px;top:139px;width:938px;height:383px;">
<div class="a " style="left:10px;top:14px;width:1px;height:118px;background:repeating-linear-gradient(to bottom,#8C8C8C 0 1px,transparent 1px 2px);"></div>
<div class="a " style="left:10px;top:142px;width:1px;height:6px;background:repeating-linear-gradient(to bottom,#8C8C8C 0 1px,transparent 1px 2px);"></div>
<div class="a " style="left:10px;top:158px;width:1px;height:6px;background:repeating-linear-gradient(to bottom,#8C8C8C 0 1px,transparent 1px 2px);"></div>
<div class="a " style="left:10px;top:174px;width:1px;height:6px;background:repeating-linear-gradient(to bottom,#8C8C8C 0 1px,transparent 1px 2px);"></div>
<div class="a " style="left:10px;top:190px;width:1px;height:6px;background:repeating-linear-gradient(to bottom,#8C8C8C 0 1px,transparent 1px 2px);"></div>
<div class="a " style="left:10px;top:206px;width:1px;height:6px;background:repeating-linear-gradient(to bottom,#8C8C8C 0 1px,transparent 1px 2px);"></div>
<div class="a " style="left:10px;top:222px;width:1px;height:6px;background:repeating-linear-gradient(to bottom,#8C8C8C 0 1px,transparent 1px 2px);"></div>
<div class="a " style="left:10px;top:238px;width:1px;height:6px;background:repeating-linear-gradient(to bottom,#8C8C8C 0 1px,transparent 1px 2px);"></div>
<div class="a " style="left:10px;top:254px;width:1px;height:6px;background:repeating-linear-gradient(to bottom,#8C8C8C 0 1px,transparent 1px 2px);"></div>
<div class="a " style="left:10px;top:270px;width:1px;height:6px;background:repeating-linear-gradient(to bottom,#8C8C8C 0 1px,transparent 1px 2px);"></div>
<div class="a " style="left:10px;top:286px;width:1px;height:6px;background:repeating-linear-gradient(to bottom,#8C8C8C 0 1px,transparent 1px 2px);"></div>
<div class="a " style="left:10px;top:302px;width:1px;height:6px;background:repeating-linear-gradient(to bottom,#8C8C8C 0 1px,transparent 1px 2px);"></div>
<div class="a " style="left:10px;top:318px;width:1px;height:6px;background:repeating-linear-gradient(to bottom,#8C8C8C 0 1px,transparent 1px 2px);"></div>
<div class="a " style="left:29px;top:16px;width:1px;height:105px;background:repeating-linear-gradient(to bottom,#8C8C8C 0 1px,transparent 1px 2px);"></div>
<div class="a " style="left:59px;top:32px;width:900px;height:16px;background:#0078D7;"></div>
<div class="a " style="left:59px;top:32px;width:900px;height:1px;background:repeating-linear-gradient(to right,#000 0 1px,#FF8A28 1px 2px);"></div>
<div class="a " style="left:59px;top:47px;width:900px;height:1px;background:repeating-linear-gradient(to right,#000 0 1px,#FF8A28 1px 2px);"></div>
<div class="a " style="left:59px;top:32px;width:1px;height:16px;background:repeating-linear-gradient(to bottom,#000 0 1px,#FF8A28 1px 2px);"></div>
<div class="a " style="left:16px;top:8px;width:6px;height:1px;background:repeating-linear-gradient(to right,#8C8C8C 0 1px,transparent 1px 2px);"></div>
<svg class="a" style="left:6px;top:4px" width="9" height="9" viewBox="0 0 9 9"><defs></defs><rect x=".5" y=".5" width="8" height="8" fill="url(#gbx)" stroke="#919191"/><path d="M2 4.5 H7" stroke="#262626" stroke-width="1"/></svg>
<svg class="a" style="left:22px;top:0px" width="16" height="16"><use href="#ipen"/></svg>
<div class="a t" style="left:42px;top:0px;font-size:11px;line-height:16px;height:16px;transform:scaleX(0.9219);transform-origin:0 0;">1. ZEMLJANI RADOVI</div>
<div class="a " style="left:30px;top:24px;width:11px;height:1px;background:repeating-linear-gradient(to right,#8C8C8C 0 1px,transparent 1px 2px);"></div>
<svg class="a" style="left:41px;top:16px" width="14" height="16"><use href="#idoc"/></svg>
<div class="a t " style="left:61px;top:16px;font-size:11px;line-height:16px;height:16px;letter-spacing:-0.103px;">Zemljane radove treba izvesti bez zastoja, odjednom i u celini, po suvom vremenu i u što kraćem roku.</div>
<div class="a " style="left:30px;top:40px;width:11px;height:1px;background:repeating-linear-gradient(to right,#8C8C8C 0 1px,transparent 1px 2px);"></div>
<svg class="a" style="left:41px;top:32px" width="14" height="16"><use href="#idoc"/></svg>
<div class="a t" style="left:62px;top:32px;font-size:11px;line-height:16px;height:16px;color:#fff;"><span style="letter-spacing:-0.148px">1.1 Raščišćavanje terena pre početka gradnje sa skidanjem šiblja i korova i iskopom površinsk</span><span style="letter-spacing:-0.107px">og sloja humusa debljine 20-30 cm, sa razmeravanjem i obeležavanjem objekta. Obračun</span><span style="letter-spacing:-0.107px"> po m3</span></div>
<div class="a " style="left:30px;top:56px;width:11px;height:1px;background:repeating-linear-gradient(to right,#8C8C8C 0 1px,transparent 1px 2px);"></div>
<svg class="a" style="left:41px;top:48px" width="14" height="16"><use href="#idoc"/></svg>
<div class="a t" style="left:61px;top:48px;font-size:11px;line-height:16px;height:16px;"><span style="letter-spacing:-0.187px">1.2 Mašinski iskop zemlje, sa odlaganjem na privremenu gradilišnu deponiju za kasnije nasipanj</span><span style="letter-spacing:-0.049px">e. Iskop raditi do kote polaganja šljunka ispod podnih ploča. U slučaju kiše, treba vodu iz</span><span style="letter-spacing:-0.049px"> temelja</span></div>
<div class="a " style="left:30px;top:72px;width:11px;height:1px;background:repeating-linear-gradient(to right,#8C8C8C 0 1px,transparent 1px 2px);"></div>
<svg class="a" style="left:41px;top:64px" width="14" height="16"><use href="#idoc"/></svg>
<div class="a t" style="left:61px;top:64px;font-size:11px;line-height:16px;height:16px;"><span style="letter-spacing:-0.127px">1.3 Ručni iskop zemlje za temelje objekta (temlejne trake, temljne grede, temelji samci) sa odla</span><span style="letter-spacing:-0.089px">ganjem zemlje na privremenu gradilišnu deponiju za kasnije nasipanje. Iskop se vrši do k</span><span style="letter-spacing:-0.089px">ote</span></div>
<div class="a " style="left:30px;top:88px;width:11px;height:1px;background:repeating-linear-gradient(to right,#8C8C8C 0 1px,transparent 1px 2px);"></div>
<svg class="a" style="left:41px;top:80px" width="14" height="16"><use href="#idoc"/></svg>
<div class="a t" style="left:61px;top:80px;font-size:11px;line-height:16px;height:16px;"><span style="letter-spacing:-0.157px">1.4 Nasipanje zdrave zemlje iz sikopa u slojevima od po 20 cm sa nabijanjem do potpune zbije</span><span style="letter-spacing:-0.061px">nosti i eventulanim kvašenjem ako to zahteva nadzorni organ. Obračun z nasipanje je dat</span><span style="letter-spacing:-0.061px"> u</span></div>
<div class="a " style="left:30px;top:104px;width:11px;height:1px;background:repeating-linear-gradient(to right,#8C8C8C 0 1px,transparent 1px 2px);"></div>
<svg class="a" style="left:41px;top:96px" width="14" height="16"><use href="#idoc"/></svg>
<div class="a t" style="left:61px;top:96px;font-size:11px;line-height:16px;height:16px;"><span style="letter-spacing:-0.114px">1.5 Odvoz viška iskopane zemlje van gradilišta na gradsku deponiju, sa utovarom i istovarom i</span><span style="letter-spacing:-0.122px">z vozila i grubim planiranjem zemlje na deponiji, udaljenoj do 10 km. Obračun po m3 preve</span><span style="letter-spacing:-0.122px">zene</span></div>
<div class="a " style="left:30px;top:120px;width:11px;height:1px;background:repeating-linear-gradient(to right,#8C8C8C 0 1px,transparent 1px 2px);"></div>
<svg class="a" style="left:41px;top:112px" width="14" height="16"><use href="#idoc"/></svg>
<div class="a t" style="left:61px;top:112px;font-size:11px;line-height:16px;height:16px;"><span style="letter-spacing:-0.045px">1.6 Nabavka, nasipanje, razastiranje i nabijanje tampon sloja šljunka u projektovanoj debljini.</span><span style="letter-spacing:-0.105px"> Šljunak mora da bude potpuno čist, bez organskih primesa. Šljunak nabijati do potrebne</span><span style="letter-spacing:-0.105px"> zbijenosti</span></div>
<div class="a " style="left:16px;top:136px;width:6px;height:1px;background:repeating-linear-gradient(to right,#8C8C8C 0 1px,transparent 1px 2px);"></div>
<svg class="a" style="left:6px;top:132px" width="9" height="9" viewBox="0 0 9 9"><defs></defs><rect x=".5" y=".5" width="8" height="8" fill="url(#gbx)" stroke="#919191"/><path d="M2 4.5 H7" stroke="#262626" stroke-width="1"/><path d="M4.5 2 V7" stroke="#262626" stroke-width="1"/></svg>
<svg class="a" style="left:22px;top:128px" width="16" height="16"><use href="#ipen"/></svg>
<div class="a t" style="left:42px;top:128px;font-size:11px;line-height:16px;height:16px;transform:scaleX(0.9197);transform-origin:0 0;">2. BETONSKI I ARMIRANO BETONSKI RADOVI</div>
<div class="a " style="left:16px;top:152px;width:6px;height:1px;background:repeating-linear-gradient(to right,#8C8C8C 0 1px,transparent 1px 2px);"></div>
<svg class="a" style="left:6px;top:148px" width="9" height="9" viewBox="0 0 9 9"><defs></defs><rect x=".5" y=".5" width="8" height="8" fill="url(#gbx)" stroke="#919191"/><path d="M2 4.5 H7" stroke="#262626" stroke-width="1"/><path d="M4.5 2 V7" stroke="#262626" stroke-width="1"/></svg>
<svg class="a" style="left:22px;top:144px" width="16" height="16"><use href="#ipen"/></svg>
<div class="a t" style="left:42px;top:144px;font-size:11px;line-height:16px;height:16px;transform:scaleX(0.9408);transform-origin:0 0;">3. ARMIRAČKI RADOVI</div>
<div class="a " style="left:16px;top:168px;width:6px;height:1px;background:repeating-linear-gradient(to right,#8C8C8C 0 1px,transparent 1px 2px);"></div>
<svg class="a" style="left:6px;top:164px" width="9" height="9" viewBox="0 0 9 9"><defs></defs><rect x=".5" y=".5" width="8" height="8" fill="url(#gbx)" stroke="#919191"/><path d="M2 4.5 H7" stroke="#262626" stroke-width="1"/><path d="M4.5 2 V7" stroke="#262626" stroke-width="1"/></svg>
<svg class="a" style="left:22px;top:160px" width="16" height="16"><use href="#ipen"/></svg>
<div class="a t" style="left:42px;top:160px;font-size:11px;line-height:16px;height:16px;transform:scaleX(0.9334);transform-origin:0 0;">4. ZIDARSKI RADOVI</div>
<div class="a " style="left:16px;top:184px;width:6px;height:1px;background:repeating-linear-gradient(to right,#8C8C8C 0 1px,transparent 1px 2px);"></div>
<svg class="a" style="left:6px;top:180px" width="9" height="9" viewBox="0 0 9 9"><defs></defs><rect x=".5" y=".5" width="8" height="8" fill="url(#gbx)" stroke="#919191"/><path d="M2 4.5 H7" stroke="#262626" stroke-width="1"/><path d="M4.5 2 V7" stroke="#262626" stroke-width="1"/></svg>
<svg class="a" style="left:22px;top:176px" width="16" height="16"><use href="#ipen"/></svg>
<div class="a t" style="left:42px;top:176px;font-size:11px;line-height:16px;height:16px;transform:scaleX(0.9134);transform-origin:0 0;">5. TESARSKI RADOVI</div>
<div class="a " style="left:16px;top:200px;width:6px;height:1px;background:repeating-linear-gradient(to right,#8C8C8C 0 1px,transparent 1px 2px);"></div>
<svg class="a" style="left:6px;top:196px" width="9" height="9" viewBox="0 0 9 9"><defs></defs><rect x=".5" y=".5" width="8" height="8" fill="url(#gbx)" stroke="#919191"/><path d="M2 4.5 H7" stroke="#262626" stroke-width="1"/><path d="M4.5 2 V7" stroke="#262626" stroke-width="1"/></svg>
<svg class="a" style="left:22px;top:192px" width="16" height="16"><use href="#ipen"/></svg>
<div class="a t" style="left:42px;top:192px;font-size:11px;line-height:16px;height:16px;transform:scaleX(0.9284);transform-origin:0 0;">6. IZOLATERSKI RADOVI</div>
<div class="a " style="left:16px;top:216px;width:6px;height:1px;background:repeating-linear-gradient(to right,#8C8C8C 0 1px,transparent 1px 2px);"></div>
<svg class="a" style="left:6px;top:212px" width="9" height="9" viewBox="0 0 9 9"><defs></defs><rect x=".5" y=".5" width="8" height="8" fill="url(#gbx)" stroke="#919191"/><path d="M2 4.5 H7" stroke="#262626" stroke-width="1"/><path d="M4.5 2 V7" stroke="#262626" stroke-width="1"/></svg>
<svg class="a" style="left:22px;top:208px" width="16" height="16"><use href="#ipen"/></svg>
<div class="a t" style="left:42px;top:208px;font-size:11px;line-height:16px;height:16px;transform:scaleX(0.9158);transform-origin:0 0;">7. STOLARSKI RADOVI</div>
<div class="a " style="left:16px;top:232px;width:6px;height:1px;background:repeating-linear-gradient(to right,#8C8C8C 0 1px,transparent 1px 2px);"></div>
<svg class="a" style="left:6px;top:228px" width="9" height="9" viewBox="0 0 9 9"><defs></defs><rect x=".5" y=".5" width="8" height="8" fill="url(#gbx)" stroke="#919191"/><path d="M2 4.5 H7" stroke="#262626" stroke-width="1"/><path d="M4.5 2 V7" stroke="#262626" stroke-width="1"/></svg>
<svg class="a" style="left:22px;top:224px" width="16" height="16"><use href="#ipen"/></svg>
<div class="a t" style="left:42px;top:224px;font-size:11px;line-height:16px;height:16px;transform:scaleX(0.926);transform-origin:0 0;">8. BRAVARSKI RADOVI</div>
<div class="a " style="left:16px;top:248px;width:6px;height:1px;background:repeating-linear-gradient(to right,#8C8C8C 0 1px,transparent 1px 2px);"></div>
<svg class="a" style="left:6px;top:244px" width="9" height="9" viewBox="0 0 9 9"><defs></defs><rect x=".5" y=".5" width="8" height="8" fill="url(#gbx)" stroke="#919191"/><path d="M2 4.5 H7" stroke="#262626" stroke-width="1"/><path d="M4.5 2 V7" stroke="#262626" stroke-width="1"/></svg>
<svg class="a" style="left:22px;top:240px" width="16" height="16"><use href="#ipen"/></svg>
<div class="a t" style="left:42px;top:240px;font-size:11px;line-height:16px;height:16px;transform:scaleX(0.9282);transform-origin:0 0;">9. LIMARSKI RADOVI</div>
<div class="a " style="left:16px;top:264px;width:6px;height:1px;background:repeating-linear-gradient(to right,#8C8C8C 0 1px,transparent 1px 2px);"></div>
<svg class="a" style="left:6px;top:260px" width="9" height="9" viewBox="0 0 9 9"><defs></defs><rect x=".5" y=".5" width="8" height="8" fill="url(#gbx)" stroke="#919191"/><path d="M2 4.5 H7" stroke="#262626" stroke-width="1"/><path d="M4.5 2 V7" stroke="#262626" stroke-width="1"/></svg>
<svg class="a" style="left:22px;top:256px" width="16" height="16"><use href="#ipen"/></svg>
<div class="a t" style="left:42px;top:256px;font-size:11px;line-height:16px;height:16px;transform:scaleX(0.9201);transform-origin:0 0;">10. KERAMIČARSKI RADOVI</div>
<div class="a " style="left:16px;top:280px;width:6px;height:1px;background:repeating-linear-gradient(to right,#8C8C8C 0 1px,transparent 1px 2px);"></div>
<svg class="a" style="left:6px;top:276px" width="9" height="9" viewBox="0 0 9 9"><defs></defs><rect x=".5" y=".5" width="8" height="8" fill="url(#gbx)" stroke="#919191"/><path d="M2 4.5 H7" stroke="#262626" stroke-width="1"/><path d="M4.5 2 V7" stroke="#262626" stroke-width="1"/></svg>
<svg class="a" style="left:22px;top:272px" width="16" height="16"><use href="#ipen"/></svg>
<div class="a t" style="left:42px;top:272px;font-size:11px;line-height:16px;height:16px;transform:scaleX(0.9198);transform-origin:0 0;">11. PODOPOLAGAČKI RADOVI</div>
<div class="a " style="left:16px;top:296px;width:6px;height:1px;background:repeating-linear-gradient(to right,#8C8C8C 0 1px,transparent 1px 2px);"></div>
<svg class="a" style="left:6px;top:292px" width="9" height="9" viewBox="0 0 9 9"><defs></defs><rect x=".5" y=".5" width="8" height="8" fill="url(#gbx)" stroke="#919191"/><path d="M2 4.5 H7" stroke="#262626" stroke-width="1"/><path d="M4.5 2 V7" stroke="#262626" stroke-width="1"/></svg>
<svg class="a" style="left:22px;top:288px" width="16" height="16"><use href="#ipen"/></svg>
<div class="a t" style="left:42px;top:288px;font-size:11px;line-height:16px;height:16px;transform:scaleX(0.907);transform-origin:0 0;">12. MOLERSKO FARBARSKI RADOVI</div>
<div class="a " style="left:16px;top:312px;width:6px;height:1px;background:repeating-linear-gradient(to right,#8C8C8C 0 1px,transparent 1px 2px);"></div>
<svg class="a" style="left:6px;top:308px" width="9" height="9" viewBox="0 0 9 9"><defs></defs><rect x=".5" y=".5" width="8" height="8" fill="url(#gbx)" stroke="#919191"/><path d="M2 4.5 H7" stroke="#262626" stroke-width="1"/><path d="M4.5 2 V7" stroke="#262626" stroke-width="1"/></svg>
<svg class="a" style="left:22px;top:304px" width="16" height="16"><use href="#ipen"/></svg>
<div class="a t" style="left:42px;top:304px;font-size:11px;line-height:16px;height:16px;transform:scaleX(0.9197);transform-origin:0 0;">13. FASADERSKI RADOVI</div>
<div class="a " style="left:16px;top:328px;width:6px;height:1px;background:repeating-linear-gradient(to right,#8C8C8C 0 1px,transparent 1px 2px);"></div>
<svg class="a" style="left:6px;top:324px" width="9" height="9" viewBox="0 0 9 9"><defs></defs><rect x=".5" y=".5" width="8" height="8" fill="url(#gbx)" stroke="#919191"/><path d="M2 4.5 H7" stroke="#262626" stroke-width="1"/><path d="M4.5 2 V7" stroke="#262626" stroke-width="1"/></svg>
<svg class="a" style="left:22px;top:320px" width="16" height="16"><use href="#ipen"/></svg>
<div class="a t" style="left:42px;top:320px;font-size:11px;line-height:16px;height:16px;transform:scaleX(0.9422);transform-origin:0 0;">14. RAZNI RADOVI</div>
</div>
<div class="a " style="left:969px;top:522px;width:939px;height:17px;background:#fff;border:1px solid #C4C4C4;border-left:none;"></div>
<div class="a " style="left:969px;top:522px;width:17px;height:17px;border:1px solid #C4C4C4;border-left:none;"></div>
<div class="a " style="left:1891px;top:522px;width:17px;height:17px;border:1px solid #C4C4C4;"></div>
<svg class="a" style="left:969px;top:522px" width="17" height="17"><path d="M10.2 5 L6.5 8.5 L10.2 12" fill="none" stroke="#5A5A5A" stroke-width="1.3"/></svg>
<svg class="a" style="left:1891px;top:522px" width="17" height="17"><path d="M6.8 5 L10.5 8.5 L6.8 12" fill="none" stroke="#5A5A5A" stroke-width="1.3"/></svg>
<div class="a " style="left:986px;top:522px;width:635px;height:17px;background:#DCDCDC;border:1px solid #A6A6A6;"></div>
<div class="a " style="left:1299px;top:527px;width:2px;height:7px;background:#5E5E5E;"></div>
<div class="a " style="left:1302px;top:527px;width:2px;height:7px;background:#5E5E5E;"></div>
<div class="a " style="left:1305px;top:527px;width:2px;height:7px;background:#5E5E5E;"></div>
<div class="a " style="left:12px;top:544px;width:951px;height:467px;border-style:solid;border-width:1px;border-color:#A0A0A0 #fff #fff #A0A0A0;"></div>
<div class="a " style="left:13px;top:545px;width:949px;height:465px;border-style:solid;border-width:1px;border-color:#696969 #E3E3E3 #E3E3E3 #696969;"></div>
<div class="a " style="left:24px;top:561px;width:811px;height:133px;background:#fff;border:1px solid #7A7A7A;"></div>
<div class="a " style="left:816px;top:563px;width:17px;height:129px;background:#fff;border:1px solid #C2C2C2;"></div>
<div class="a " style="left:816px;top:563px;width:17px;height:17px;border-bottom:1px solid #C2C2C2;"></div>
<div class="a " style="left:816px;top:675px;width:17px;height:17px;border-top:1px solid #C2C2C2;"></div>
<svg class="a" style="left:816px;top:563px" width="17" height="17"><path d="M5.2 11.3 L8.5 7.3 L11.8 11.3" fill="none" stroke="#707070" stroke-width="1.1"/></svg>
<svg class="a" style="left:816px;top:675px" width="17" height="17"><path d="M5.2 6.4 L8.5 10.4 L11.8 6.4" fill="none" stroke="#707070" stroke-width="1.1"/></svg>
<div class="a t" style="left:29px;top:564px;font-size:11px;line-height:14px;height:14px;"><span style="letter-spacing:-0.175px">Nasipanje zdrave zemlje iz iskopa u slojevima od po 20 cm sa ručnim nabijanjem do potpune zb</span><span style="letter-spacing:-0.118px">ijenosti. Dovoz zemlje sa gradilišne deponije.</span></div>
<div class="a " style="left:850.5px;top:561px;width:103.5px;height:45px;border:1px solid #D3DDE4;border-radius:3px;box-shadow:inset 1px 1px 0 #fff, 1px 1px 0 #fff;"></div>
<div class="a " style="left:857px;top:559px;width:39px;height:6px;background:#F0F0F0;"></div>
<div class="a t " style="left:859px;top:554px;font-size:11px;line-height:16px;height:16px;letter-spacing:-0.584px;">Oznaka</div>
<div class="a " style="left:862px;top:571px;width:83px;height:26px;background:#F0F0F0;border:1px solid #ADADAD;"></div>
<div class="a " style="left:850.5px;top:620px;width:103.5px;height:53px;border:1px solid #D3DDE4;border-radius:3px;box-shadow:inset 1px 1px 0 #fff, 1px 1px 0 #fff;"></div>
<div class="a " style="left:857px;top:618px;width:54px;height:6px;background:#F0F0F0;"></div>
<div class="a t " style="left:859px;top:613px;font-size:11px;line-height:16px;height:16px;letter-spacing:-0.243px;">Vrsta cene</div>
<svg class="a" style="left:859px;top:634px" width="14" height="14"><circle cx="7" cy="7" r="5.5" fill="#fff" stroke="#333" stroke-width="1"/></svg>
<div class="a t " style="left:875.5px;top:634px;font-size:11px;line-height:16px;height:16px;letter-spacing:-0.429px;">Slobodna</div>
<svg class="a" style="left:859px;top:653px" width="14" height="14"><circle cx="7" cy="7" r="5.5" fill="#fff" stroke="#333" stroke-width="1"/><circle cx="7" cy="7" r="2.8" fill="#222"/></svg>
<div class="a t " style="left:875.5px;top:653px;font-size:11px;line-height:16px;height:16px;letter-spacing:-0.734px;">Normom</div>
<div class="a t " style="left:796.5px;top:702px;font-size:11px;line-height:16px;height:16px;letter-spacing:-0.178px;">Jed. mere</div>
<div class="a " style="left:850px;top:700px;width:75px;height:26px;background:#fff;border:1px solid #7A7A7A;"></div>
<div class="a t " style="left:855px;top:702px;font-size:11px;line-height:16px;height:16px;letter-spacing:0.672px;">m³</div>
<div class="a btn" style="left:926px;top:701px;width:13px;height:18px;"></div>
<div class="a t " style="left:930.55px;top:703px;font-size:7px;line-height:10px;height:10px;font-weight:bold;">2</div>
<div class="a btn" style="left:941px;top:701px;width:13px;height:18px;"></div>
<div class="a t " style="left:945.55px;top:703px;font-size:7px;line-height:10px;height:10px;font-weight:bold;">3</div>
<div class="a t " style="left:809px;top:732px;font-size:11px;line-height:16px;height:16px;letter-spacing:-0.504px;">Količina</div>
<div class="a " style="left:850px;top:730px;width:75px;height:26px;background:#fff;border:1px solid #7A7A7A;"></div>
<div class="a t " style="left:855px;top:732px;font-size:11px;line-height:16px;height:16px;letter-spacing:0.193px;">0,00</div>
<div class="a t " style="left:797.5px;top:762px;font-size:11px;line-height:16px;height:16px;letter-spacing:-0.15px;">Jed. cena</div>
<div class="a " style="left:850px;top:760px;width:105px;height:26px;background:#F0F0F0;border:1px solid #7A7A7A;"></div>
<div class="a t " style="left:855.5px;top:762px;font-size:11px;line-height:16px;height:16px;letter-spacing:0.069px;">294,00</div>
<div class="a t " style="left:808px;top:792px;font-size:11px;line-height:16px;height:16px;letter-spacing:-0.384px;">Ukupno</div>
<div class="a " style="left:850px;top:790px;width:105px;height:26px;background:#F0F0F0;border:1px solid #7A7A7A;"></div>
<div class="a t " style="left:855.5px;top:792px;font-size:11px;line-height:16px;height:16px;letter-spacing:0.026px;">0,00</div>
<div class="a " style="left:25px;top:701px;width:410px;height:117px;border-style:solid;border-width:1px;border-color:#A0A0A0 #fff #fff #A0A0A0;"></div>
<div class="a " style="left:26px;top:702px;width:408px;height:115px;border-style:solid;border-width:1px;border-color:#696969 #E3E3E3 #E3E3E3 #696969;background:#F0F0F0;"></div>
<div class="a " style="left:27px;top:703px;width:137px;height:19px;background:#F0F0F0;border-style:solid;border-width:1px;border-color:#fff #696969 #696969 #fff;"></div>
<div class="a t " style="left:31px;top:705px;font-size:11px;line-height:16px;height:16px;letter-spacing:-0.081px;color:#8C8C8C;">Struktura cene</div>
<div class="a " style="left:164px;top:702px;width:90px;height:20px;background:#F0F0F0;border-style:solid;border-width:1px;border-color:#fff #696969 #696969 #fff;"></div>
<div class="a t " style="left:174.75px;top:702px;font-size:11px;line-height:18px;height:18px;letter-spacing:0.173px;">Mat. (1,0000)</div>
<div class="a " style="left:254px;top:702px;width:90px;height:20px;background:#F0F0F0;border-style:solid;border-width:1px;border-color:#fff #696969 #696969 #fff;"></div>
<div class="a t " style="left:264.25px;top:702px;font-size:11px;line-height:18px;height:18px;letter-spacing:0.103px;">Rad. (1,0000)</div>
<div class="a " style="left:344px;top:702px;width:90px;height:20px;background:#F0F0F0;border-style:solid;border-width:1px;border-color:#fff #696969 #696969 #fff;"></div>
<div class="a t " style="left:353.75px;top:702px;font-size:11px;line-height:18px;height:18px;letter-spacing:0.085px;">Meh. (1,0000)</div>
<div class="a " style="left:27px;top:722px;width:137px;height:19px;background:#F0F0F0;border-style:solid;border-width:1px;border-color:#fff #4A4A4A #4A4A4A #fff;"></div>
<div class="a t " style="left:30px;top:724px;font-size:11px;line-height:17px;height:17px;letter-spacing:-0.006px;">Cena (troškovi)</div>
<div class="a " style="left:164px;top:722px;width:90px;height:19px;background:#F0F0F0;border-right:1px solid #C4C4C4;border-bottom:1px solid #C4C4C4;"></div>
<div class="a t " style="left:230.04px;top:724px;font-size:11px;line-height:17px;height:17px;letter-spacing:-0.321px;">0,00</div>
<div class="a " style="left:254px;top:722px;width:90px;height:19px;background:#F0F0F0;border-right:1px solid #C4C4C4;border-bottom:1px solid #C4C4C4;"></div>
<div class="a t " style="left:308.36px;top:724px;font-size:11px;line-height:17px;height:17px;letter-spacing:-0.303px;">294,00</div>
<div class="a " style="left:344px;top:722px;width:90px;height:19px;background:#F0F0F0;border-right:1px solid #C4C4C4;border-bottom:1px solid #C4C4C4;"></div>
<div class="a t " style="left:410.04px;top:724px;font-size:11px;line-height:17px;height:17px;letter-spacing:-0.321px;">0,00</div>
<div class="a " style="left:27px;top:741px;width:137px;height:19px;background:#D6D6FA;border-style:solid;border-width:1px;border-color:#fff #4A4A4A #4A4A4A #fff;"></div>
<div class="a t " style="left:30px;top:743px;font-size:11px;line-height:17px;height:17px;letter-spacing:-0.083px;">Koef. korekcije</div>
<div class="a " style="left:164px;top:741px;width:90px;height:19px;background:#FFFFFF;border-right:1px solid #C4C4C4;border-bottom:1px solid #C4C4C4;"></div>
<div class="a t " style="left:218.36px;top:743px;font-size:11px;line-height:17px;height:17px;letter-spacing:-0.303px;">1,0000</div>
<div class="a " style="left:254px;top:741px;width:90px;height:19px;background:#FFFFFF;border-right:1px solid #C4C4C4;border-bottom:1px solid #C4C4C4;"></div>
<div class="a t " style="left:308.36px;top:743px;font-size:11px;line-height:17px;height:17px;letter-spacing:-0.303px;">1,0000</div>
<div class="a " style="left:344px;top:741px;width:90px;height:19px;background:#FFFFFF;border-right:1px solid #C4C4C4;border-bottom:1px solid #C4C4C4;"></div>
<div class="a t " style="left:398.36px;top:743px;font-size:11px;line-height:17px;height:17px;letter-spacing:-0.303px;">1,0000</div>
<div class="a " style="left:27px;top:760px;width:137px;height:19px;background:#F0F0F0;border-style:solid;border-width:1px;border-color:#fff #4A4A4A #4A4A4A #fff;"></div>
<div class="a t " style="left:30px;top:762px;font-size:11px;line-height:17px;height:17px;letter-spacing:-0.15px;">Cena (zvanična)</div>
<div class="a " style="left:164px;top:760px;width:90px;height:19px;background:#F0F0F0;border-right:1px solid #C4C4C4;border-bottom:1px solid #C4C4C4;"></div>
<div class="a t " style="left:230.04px;top:762px;font-size:11px;line-height:17px;height:17px;letter-spacing:-0.321px;">0,00</div>
<div class="a " style="left:254px;top:760px;width:90px;height:19px;background:#F0F0F0;border-right:1px solid #C4C4C4;border-bottom:1px solid #C4C4C4;"></div>
<div class="a t " style="left:308.36px;top:762px;font-size:11px;line-height:17px;height:17px;letter-spacing:-0.303px;">294,00</div>
<div class="a " style="left:344px;top:760px;width:90px;height:19px;background:#F0F0F0;border-right:1px solid #C4C4C4;border-bottom:1px solid #C4C4C4;"></div>
<div class="a t " style="left:410.04px;top:762px;font-size:11px;line-height:17px;height:17px;letter-spacing:-0.321px;">0,00</div>
<div class="a " style="left:27px;top:779px;width:137px;height:19px;background:#F0F0F0;border-style:solid;border-width:1px;border-color:#fff #4A4A4A #4A4A4A #fff;"></div>
<div class="a t " style="left:30px;top:781px;font-size:11px;line-height:17px;height:17px;letter-spacing:-1.562px;">PDV</div>
<div class="a " style="left:164px;top:779px;width:90px;height:19px;background:#F0F0F0;border-right:1px solid #C4C4C4;border-bottom:1px solid #C4C4C4;"></div>
<div class="a t " style="left:230.04px;top:781px;font-size:11px;line-height:17px;height:17px;letter-spacing:-0.321px;">0,00</div>
<div class="a " style="left:254px;top:779px;width:90px;height:19px;background:#F0F0F0;border-right:1px solid #C4C4C4;border-bottom:1px solid #C4C4C4;"></div>
<div class="a t " style="left:320.04px;top:781px;font-size:11px;line-height:17px;height:17px;letter-spacing:-0.321px;">0,00</div>
<div class="a " style="left:344px;top:779px;width:90px;height:19px;background:#F0F0F0;border-right:1px solid #C4C4C4;border-bottom:1px solid #C4C4C4;"></div>
<div class="a t " style="left:410.04px;top:781px;font-size:11px;line-height:17px;height:17px;letter-spacing:-0.321px;">0,00</div>
<div class="a " style="left:27px;top:798px;width:137px;height:19px;background:#D6FBD6;border-style:solid;border-width:1px;border-color:#fff #4A4A4A #4A4A4A #fff;"></div>
<div class="a t " style="left:30px;top:800px;font-size:11px;line-height:17px;height:17px;letter-spacing:-0.484px;">Ukupno</div>
<div class="a " style="left:164px;top:798px;width:90px;height:19px;background:#D6FBD6;border-right:1px solid #C4C4C4;border-bottom:1px solid #C4C4C4;"></div>
<div class="a t " style="left:230.04px;top:800px;font-size:11px;line-height:17px;height:17px;letter-spacing:-0.321px;">0,00</div>
<div class="a " style="left:254px;top:798px;width:90px;height:19px;background:#D6FBD6;border-right:1px solid #C4C4C4;border-bottom:1px solid #C4C4C4;"></div>
<div class="a t " style="left:308.36px;top:800px;font-size:11px;line-height:17px;height:17px;letter-spacing:-0.303px;">294,00</div>
<div class="a " style="left:344px;top:798px;width:90px;height:19px;background:#D6FBD6;border-right:1px solid #C4C4C4;border-bottom:1px solid #C4C4C4;"></div>
<div class="a t " style="left:410.04px;top:800px;font-size:11px;line-height:17px;height:17px;letter-spacing:-0.321px;">0,00</div>
<div class="a " style="left:24px;top:828px;width:931px;height:138px;border-style:solid;border-width:1px;border-color:#696969 #A0A0A0 #A0A0A0 #696969;background:#F0F0F0;"></div>
<div class="a " style="left:25px;top:829px;width:929px;height:136px;border-style:solid;border-width:1px;border-color:#696969 #F0F0F0 #F0F0F0 #696969;"></div>
<div class="a " style="left:27px;top:831px;width:24px;height:19px;background:#F0F0F0;border-style:solid;border-width:1px;border-color:#fff #696969 #696969 #fff;"></div>
<div class="a " style="left:51px;top:831px;width:60px;height:19px;background:#F0F0F0;border-style:solid;border-width:1px;border-color:#fff #696969 #696969 #fff;"></div>
<div class="a t " style="left:63.0px;top:831px;font-size:11px;line-height:17px;height:17px;letter-spacing:-0.156px;">Šifra</div>
<div class="a " style="left:111px;top:831px;width:60px;height:19px;background:#F0F0F0;border-style:solid;border-width:1px;border-color:#fff #696969 #696969 #fff;"></div>
<div class="a t " style="left:123.0px;top:831px;font-size:11px;line-height:17px;height:17px;letter-spacing:-0.537px;">Učešće</div>
<div class="a " style="left:171px;top:831px;width:60px;height:19px;background:#F0F0F0;border-style:solid;border-width:1px;border-color:#fff #696969 #696969 #fff;"></div>
<div class="a t " style="left:184.25px;top:831px;font-size:11px;line-height:17px;height:17px;letter-spacing:-0.059px;">K.Mat.</div>
<div class="a " style="left:231px;top:831px;width:60px;height:19px;background:#F0F0F0;border-style:solid;border-width:1px;border-color:#fff #696969 #696969 #fff;"></div>
<div class="a t " style="left:243.75px;top:831px;font-size:11px;line-height:17px;height:17px;letter-spacing:-0.228px;">K.Rad.</div>
<div class="a " style="left:291px;top:831px;width:60px;height:19px;background:#F0F0F0;border-style:solid;border-width:1px;border-color:#fff #696969 #696969 #fff;"></div>
<div class="a t " style="left:303.25px;top:831px;font-size:11px;line-height:17px;height:17px;letter-spacing:-0.272px;">K.Meh.</div>
<div class="a " style="left:351px;top:831px;width:60px;height:19px;background:#F0F0F0;border-style:solid;border-width:1px;border-color:#fff #696969 #696969 #fff;"></div>
<div class="a t " style="left:363.5px;top:831px;font-size:11px;line-height:17px;height:17px;letter-spacing:-0.125px;">J.Mere</div>
<div class="a " style="left:411px;top:831px;width:507px;height:19px;background:#F0F0F0;border-style:solid;border-width:1px;border-color:#fff #696969 #696969 #fff;"></div>
<div class="a t " style="left:653.25px;top:831px;font-size:11px;line-height:17px;height:17px;letter-spacing:-0.708px;">Opis</div>
<svg class="a" style="left:94px;top:832px" width="11" height="6"><path d="M0 0 H10 L5 5.5 Z" fill="#000"/></svg>
<div class="a " style="left:27px;top:850px;width:24px;height:19px;background:#F0F0F0;border-style:solid;border-width:1px;border-color:#fff #696969 #696969 #fff;"></div>
<div class="a " style="left:51px;top:850px;width:60px;height:19px;background:#fff;border-right:1px solid #D0D0D0;border-bottom:1px solid #D0D0D0;"></div>
<div class="a t " style="left:53.5px;top:851px;font-size:11px;line-height:18px;height:18px;letter-spacing:-0.044px;">020402</div>
<div class="a " style="left:111px;top:850px;width:60px;height:19px;background:#fff;border-right:1px solid #D0D0D0;border-bottom:1px solid #D0D0D0;"></div>
<div class="a t " style="left:114.5px;top:851px;font-size:11px;line-height:18px;height:18px;letter-spacing:-0.258px;">1,000</div>
<div class="a " style="left:171px;top:850px;width:60px;height:19px;background:#fff;border-right:1px solid #D0D0D0;border-bottom:1px solid #D0D0D0;"></div>
<div class="a t " style="left:174.5px;top:851px;font-size:11px;line-height:18px;height:18px;letter-spacing:-0.231px;">1,0000</div>
<div class="a " style="left:231px;top:850px;width:60px;height:19px;background:#fff;border-right:1px solid #D0D0D0;border-bottom:1px solid #D0D0D0;"></div>
<div class="a t " style="left:234.5px;top:851px;font-size:11px;line-height:18px;height:18px;letter-spacing:-0.231px;">1,0000</div>
<div class="a " style="left:291px;top:850px;width:60px;height:19px;background:#fff;border-right:1px solid #D0D0D0;border-bottom:1px solid #D0D0D0;"></div>
<div class="a t " style="left:294.5px;top:851px;font-size:11px;line-height:18px;height:18px;letter-spacing:-0.231px;">1,0000</div>
<div class="a " style="left:351px;top:850px;width:60px;height:19px;background:#fff;border-right:1px solid #D0D0D0;border-bottom:1px solid #D0D0D0;"></div>
<div class="a t " style="left:353.5px;top:851px;font-size:11px;line-height:18px;height:18px;letter-spacing:0.172px;">m³</div>
<div class="a " style="left:411px;top:850px;width:507px;height:19px;background:#fff;border-right:1px solid #D0D0D0;border-bottom:1px solid #D0D0D0;"></div>
<div class="a t" style="left:413.5px;top:851px;font-size:11px;line-height:18px;height:18px;transform:scaleX(0.9195);transform-origin:0 0;">RUČNO NABI</div>
<div class="a t" style="left:477px;top:851px;font-size:11px;line-height:18px;height:18px;transform:scaleX(0.9004);transform-origin:0 0;">JANJE ZEMLJE U SLOJU OD 20 CM.NABIJAČEM TEŽINE 10 KG.DO POTREBNE ZBIJENOSTI</div>
<div class="a " style="left:27px;top:869px;width:24px;height:19px;background:#F0F0F0;border-style:solid;border-width:1px;border-color:#fff #696969 #696969 #fff;"></div>
<div class="a " style="left:51px;top:869px;width:60px;height:19px;background:#fff;border-right:1px solid #D0D0D0;border-bottom:1px solid #D0D0D0;"></div>
<div class="a t " style="left:53.5px;top:870px;font-size:11px;line-height:18px;height:18px;letter-spacing:-0.044px;">452401</div>
<div class="a " style="left:111px;top:869px;width:60px;height:19px;background:#fff;border-right:1px solid #D0D0D0;border-bottom:1px solid #D0D0D0;"></div>
<div class="a t " style="left:114.5px;top:870px;font-size:11px;line-height:18px;height:18px;letter-spacing:-0.258px;">1,000</div>
<div class="a " style="left:171px;top:869px;width:60px;height:19px;background:#fff;border-right:1px solid #D0D0D0;border-bottom:1px solid #D0D0D0;"></div>
<div class="a t " style="left:174.5px;top:870px;font-size:11px;line-height:18px;height:18px;letter-spacing:-0.231px;">1,0000</div>
<div class="a " style="left:231px;top:869px;width:60px;height:19px;background:#fff;border-right:1px solid #D0D0D0;border-bottom:1px solid #D0D0D0;"></div>
<div class="a t " style="left:234.5px;top:870px;font-size:11px;line-height:18px;height:18px;letter-spacing:-0.231px;">1,0000</div>
<div class="a " style="left:291px;top:869px;width:60px;height:19px;background:#fff;border-right:1px solid #D0D0D0;border-bottom:1px solid #D0D0D0;"></div>
<div class="a t " style="left:294.5px;top:870px;font-size:11px;line-height:18px;height:18px;letter-spacing:-0.231px;">1,0000</div>
<div class="a " style="left:351px;top:869px;width:60px;height:19px;background:#fff;border-right:1px solid #D0D0D0;border-bottom:1px solid #D0D0D0;"></div>
<div class="a t " style="left:353.5px;top:870px;font-size:11px;line-height:18px;height:18px;letter-spacing:0.172px;">m³</div>
<div class="a " style="left:411px;top:869px;width:507px;height:19px;background:#fff;border-right:1px solid #D0D0D0;border-bottom:1px solid #D0D0D0;"></div>
<div class="a t" style="left:413.5px;top:870px;font-size:11px;line-height:18px;height:18px;transform:scaleX(0.8388);transform-origin:0 0;">PREVOZ RUČ</div>
<div class="a t" style="left:474px;top:870px;font-size:11px;line-height:18px;height:18px;transform:scaleX(0.9359);transform-origin:0 0;">NIM KOLICIMA GRUDASTOG MATERIJALA PRIRODNO VLAŽNOG–ISKOP 3 I 4 KAT I SL.–...</div>
<div class="a " style="left:27px;top:888px;width:24px;height:19px;background:#F0F0F0;border-style:solid;border-width:1px;border-color:#fff #696969 #696969 #fff;"></div>
<div class="a " style="left:51px;top:888px;width:60px;height:19px;background:#fff;border-right:1px solid #D0D0D0;border-bottom:1px solid #D0D0D0;"></div>
<div class="a t " style="left:53.5px;top:889px;font-size:11px;line-height:18px;height:18px;letter-spacing:-0.044px;">452402</div>
<div class="a " style="left:111px;top:888px;width:60px;height:19px;background:#fff;border-right:1px solid #D0D0D0;border-bottom:1px solid #D0D0D0;"></div>
<div class="a t " style="left:114.5px;top:889px;font-size:11px;line-height:18px;height:18px;letter-spacing:-0.258px;">1,000</div>
<div class="a " style="left:171px;top:888px;width:60px;height:19px;background:#fff;border-right:1px solid #D0D0D0;border-bottom:1px solid #D0D0D0;"></div>
<div class="a t " style="left:174.5px;top:889px;font-size:11px;line-height:18px;height:18px;letter-spacing:-0.231px;">1,0000</div>
<div class="a " style="left:231px;top:888px;width:60px;height:19px;background:#fff;border-right:1px solid #D0D0D0;border-bottom:1px solid #D0D0D0;"></div>
<div class="a t " style="left:234.5px;top:889px;font-size:11px;line-height:18px;height:18px;letter-spacing:-0.231px;">1,0000</div>
<div class="a " style="left:291px;top:888px;width:60px;height:19px;background:#fff;border-right:1px solid #D0D0D0;border-bottom:1px solid #D0D0D0;"></div>
<div class="a t " style="left:294.5px;top:889px;font-size:11px;line-height:18px;height:18px;letter-spacing:-0.231px;">1,0000</div>
<div class="a " style="left:351px;top:888px;width:60px;height:19px;background:#fff;border-right:1px solid #D0D0D0;border-bottom:1px solid #D0D0D0;"></div>
<div class="a t " style="left:353.5px;top:889px;font-size:11px;line-height:18px;height:18px;letter-spacing:0.172px;">m³</div>
<div class="a " style="left:411px;top:888px;width:507px;height:19px;background:#fff;border-right:1px solid #D0D0D0;border-bottom:1px solid #D0D0D0;"></div>
<div class="a t" style="left:413.5px;top:889px;font-size:11px;line-height:18px;height:18px;transform:scaleX(0.8388);transform-origin:0 0;">PREVOZ RUČ</div>
<div class="a t" style="left:474px;top:889px;font-size:11px;line-height:18px;height:18px;transform:scaleX(0.9384);transform-origin:0 0;">NIM KOLICIMA GRUDASTOG MATERIJALA PRIRODNO VLAŽNOG–ISKOP 3 I 4 KAT I SL.–I...</div>
<div class="a " style="left:27px;top:907px;width:24px;height:19px;background:#F0F0F0;border-style:solid;border-width:1px;border-color:#fff #696969 #696969 #fff;"></div>
<div class="a " style="left:51px;top:907px;width:60px;height:19px;background:#fff;border-right:1px solid #D0D0D0;border-bottom:1px solid #D0D0D0;"></div>
<div class="a t " style="left:53.5px;top:908px;font-size:11px;line-height:18px;height:18px;letter-spacing:-0.044px;">452403</div>
<div class="a " style="left:111px;top:907px;width:60px;height:19px;background:#fff;border-right:1px solid #D0D0D0;border-bottom:1px solid #D0D0D0;"></div>
<div class="a t " style="left:114.5px;top:908px;font-size:11px;line-height:18px;height:18px;letter-spacing:-0.258px;">1,000</div>
<div class="a " style="left:171px;top:907px;width:60px;height:19px;background:#fff;border-right:1px solid #D0D0D0;border-bottom:1px solid #D0D0D0;"></div>
<div class="a t " style="left:174.5px;top:908px;font-size:11px;line-height:18px;height:18px;letter-spacing:-0.231px;">1,0000</div>
<div class="a " style="left:231px;top:907px;width:60px;height:19px;background:#fff;border-right:1px solid #D0D0D0;border-bottom:1px solid #D0D0D0;"></div>
<div class="a t " style="left:234.5px;top:908px;font-size:11px;line-height:18px;height:18px;letter-spacing:-0.231px;">1,0000</div>
<div class="a " style="left:291px;top:907px;width:60px;height:19px;background:#fff;border-right:1px solid #D0D0D0;border-bottom:1px solid #D0D0D0;"></div>
<div class="a t " style="left:294.5px;top:908px;font-size:11px;line-height:18px;height:18px;letter-spacing:-0.231px;">1,0000</div>
<div class="a " style="left:351px;top:907px;width:60px;height:19px;background:#fff;border-right:1px solid #D0D0D0;border-bottom:1px solid #D0D0D0;"></div>
<div class="a t " style="left:353.5px;top:908px;font-size:11px;line-height:18px;height:18px;letter-spacing:0.172px;">m³</div>
<div class="a " style="left:411px;top:907px;width:507px;height:19px;background:#fff;border-right:1px solid #D0D0D0;border-bottom:1px solid #D0D0D0;"></div>
<div class="a t" style="left:413.5px;top:908px;font-size:11px;line-height:18px;height:18px;transform:scaleX(0.8388);transform-origin:0 0;">PREVOZ RUČ</div>
<div class="a t" style="left:474px;top:908px;font-size:11px;line-height:18px;height:18px;transform:scaleX(0.9359);transform-origin:0 0;">NIM KOLICIMA GRUDASTOG MATERIJALA PRIRODNO VLAŽNOG–ISKOP 3 I 4 KAT I SL.–...</div>
<div class="a " style="left:27px;top:926px;width:24px;height:19px;background:#F0F0F0;border-style:solid;border-width:1px;border-color:#fff #696969 #696969 #fff;"></div>
<div class="a t " style="left:36.66px;top:927px;font-size:12px;line-height:14px;height:14px;">*</div>
<div class="a " style="left:51px;top:926px;width:60px;height:19px;background:#F0F0F0;border-right:1px solid #C8C8C8;border-bottom:1px solid #C8C8C8;"></div>
<div class="a " style="left:111px;top:926px;width:60px;height:19px;background:#F0F0F0;border-right:1px solid #C8C8C8;border-bottom:1px solid #C8C8C8;"></div>
<div class="a " style="left:171px;top:926px;width:60px;height:19px;background:#F0F0F0;border-right:1px solid #C8C8C8;border-bottom:1px solid #C8C8C8;"></div>
<div class="a " style="left:231px;top:926px;width:60px;height:19px;background:#F0F0F0;border-right:1px solid #C8C8C8;border-bottom:1px solid #C8C8C8;"></div>
<div class="a " style="left:291px;top:926px;width:60px;height:19px;background:#F0F0F0;border-right:1px solid #C8C8C8;border-bottom:1px solid #C8C8C8;"></div>
<div class="a " style="left:351px;top:926px;width:60px;height:19px;background:#F0F0F0;border-right:1px solid #C8C8C8;border-bottom:1px solid #C8C8C8;"></div>
<div class="a " style="left:411px;top:926px;width:507px;height:19px;background:#F0F0F0;border-right:1px solid #C8C8C8;border-bottom:1px solid #C8C8C8;"></div>
<div class="a btn" style="left:25px;top:982px;width:22px;height:24px;"></div>
<div class="a btn" style="left:55px;top:982px;width:103px;height:24px;"></div>
<div class="a t " style="left:87px;top:982px;font-size:11px;line-height:24px;height:24px;letter-spacing:-0.398px;">Dodaj normu</div>
<div class="a btnd" style="left:164px;top:982px;width:103px;height:24px;"></div>
<div class="a t " style="left:196px;top:982px;font-size:11px;line-height:24px;height:24px;letter-spacing:-0.362px;color:#8E8E8E;">Izbaci normu</div>
<div class="a btnd" style="left:273px;top:982px;width:103px;height:24px;"></div>
<div class="a t " style="left:304px;top:982px;font-size:11px;line-height:24px;height:24px;letter-spacing:-0.467px;color:#8E8E8E;">Izmeni normu</div>
<div class="a btn" style="left:382px;top:982px;width:103px;height:24px;"></div>
<div class="a t " style="left:413px;top:982px;font-size:11px;line-height:24px;height:24px;letter-spacing:-0.273px;">Analiza cene</div>
<svg class="a" style="left:28px;top:986px" width="16" height="17" viewBox="0 0 16 17"><rect x="2" y=".8" width="11" height="13.6" fill="#EAF2FB" stroke="#7F9DC0" stroke-width=".8"/><rect x="3.6" y="2.6" width="7.8" height="6" fill="#5B9BE0" stroke="#3A74BC" stroke-width=".5"/><path d="M7.5 4 V7 M6 5.6 L7.5 7.2 L9 5.6" stroke="#fff" stroke-width="1" fill="none"/><path d="M4.4 10.6 H10.6 L7.5 15 Z" fill="#3F86DA" stroke="#2A62B0" stroke-width=".5"/></svg>
<svg class="a" style="left:61px;top:986px" width="16" height="16" viewBox="0 0 16 16"><path d="M5.9 1 H9.1 V5.9 H14 V9.1 H9.1 V14 H5.9 V9.1 H1 V5.9 H5.9 Z" fill="#4CC82A" stroke="#2F9E18" stroke-width="1"/><path d="M6.9 1.9 V6.9 H1.9" fill="none" stroke="#A5EE8A" stroke-width=".9"/></svg>
<svg class="a" style="left:171px;top:986px" width="14" height="16" viewBox="0 0 14 16"><rect x="4.6" y="0" width="4.6" height="2.6" fill="#9A9A9A"/><rect x="0" y="1.8" width="14" height="2.6" fill="#9A9A9A"/><path d="M.9 5 H13 L12.6 15.8 H1.3 Z" fill="#9A9A9A"/></svg>
<svg class="a" style="left:279px;top:986px" width="17" height="16" viewBox="0 0 17 16"><path d="M0 0 H16.2 L13.4 4.6 H13 L12.6 15.8 H0 Z" fill="#9A9A9A"/></svg>
<svg class="a" style="left:388px;top:985px" width="17" height="17" viewBox="0 0 17 17"><rect x="1" y="1" width="14.6" height="14.6" fill="#DDEBFA"/><path d="M1 1 V15.6 H15.6" stroke="#2B4C9A" stroke-width="1.4" fill="none"/><path d="M1.6 9.6 L4 6 L6.4 9.4 L9 5 L11.6 8.4 L15 4.6 V12.6 H1.6 Z" fill="#F0442A"/><path d="M1.6 12 L4.6 10 L7.6 12 L10.6 9.6 L15 11.6 V14.8 H1.6 Z" fill="#FFB21E"/><path d="M2.4 2.4 h2 M6.4 2.4 h2 M10.4 2.4 h2" stroke="#5B9BE0" stroke-width="1.4"/><path d="M1 16.2 h1.6 m1.6 0 h1.6 m1.6 0 h1.6 m1.6 0 h1.6 m1.6 0 h1.6" stroke="#2B4C9A" stroke-width="1"/></svg>
<div class="a " style="left:967px;top:544px;width:943px;height:467px;border-style:solid;border-width:1px;border-color:#A0A0A0 #fff #fff #A0A0A0;"></div>
<div class="a " style="left:968px;top:545px;width:941px;height:465px;border-style:solid;border-width:1px;border-color:#696969 #E3E3E3 #E3E3E3 #696969;"></div>
<div class="a " style="left:980px;top:561px;width:801px;height:133px;background:#fff;border:1px solid #7A7A7A;"></div>
<div class="a " style="left:1762px;top:563px;width:17px;height:129px;background:#fff;border:1px solid #C2C2C2;"></div>
<div class="a " style="left:1762px;top:563px;width:17px;height:17px;border-bottom:1px solid #C2C2C2;"></div>
<div class="a " style="left:1762px;top:675px;width:17px;height:17px;border-top:1px solid #C2C2C2;"></div>
<svg class="a" style="left:1762px;top:563px" width="17" height="17"><path d="M5.2 11.3 L8.5 7.3 L11.8 11.3" fill="none" stroke="#707070" stroke-width="1.1"/></svg>
<svg class="a" style="left:1762px;top:675px" width="17" height="17"><path d="M5.2 6.4 L8.5 10.4 L11.8 6.4" fill="none" stroke="#707070" stroke-width="1.1"/></svg>
<div class="a t" style="left:985px;top:564px;font-size:11px;line-height:14px;height:14px;"><span style="letter-spacing:-0.128px">Raščišćavanje terena pre početka gradnje sa skidanjem šiblja i korova i iskopom površinskog </span><span style="letter-spacing:-0.162px">sloja humusa debljine 20-30 cm, sa razmeravanjem i obeležavanjem</span></div>
<div class="a t" style="left:985px;top:577px;font-size:11px;line-height:14px;height:14px;"><span style="letter-spacing:-0.098px">objekta. Obračun po m3 sa odvozom zemlje van gradilišta na gradsku deponiju sa utiovarom </span><span style="letter-spacing:-0.171px">i istovarom iz vozila i grubim planiranjem zemlje na deponiji.</span></div>
<div class="a " style="left:1796.5px;top:561px;width:103.5px;height:45px;border:1px solid #D3DDE4;border-radius:3px;box-shadow:inset 1px 1px 0 #fff, 1px 1px 0 #fff;"></div>
<div class="a " style="left:1803px;top:559px;width:39px;height:6px;background:#F0F0F0;"></div>
<div class="a t " style="left:1805px;top:554px;font-size:11px;line-height:16px;height:16px;letter-spacing:-0.584px;">Oznaka</div>
<div class="a " style="left:1808px;top:571px;width:83px;height:26px;background:#fff;border:1px solid #7A7A7A;"></div>
<div class="a t " style="left:1814.5px;top:573px;font-size:11px;line-height:16px;height:16px;letter-spacing:0.102px;">1.1</div>
<div class="a " style="left:1796.5px;top:620px;width:103.5px;height:53px;border:1px solid #D3DDE4;border-radius:3px;box-shadow:inset 1px 1px 0 #fff, 1px 1px 0 #fff;"></div>
<div class="a " style="left:1803px;top:618px;width:54px;height:6px;background:#F0F0F0;"></div>
<div class="a t " style="left:1805px;top:613px;font-size:11px;line-height:16px;height:16px;letter-spacing:-0.243px;">Vrsta cene</div>
<svg class="a" style="left:1805px;top:634px" width="14" height="14"><circle cx="7" cy="7" r="5.5" fill="#fff" stroke="#333" stroke-width="1"/></svg>
<div class="a t " style="left:1821.5px;top:634px;font-size:11px;line-height:16px;height:16px;letter-spacing:-0.429px;">Slobodna</div>
<svg class="a" style="left:1805px;top:653px" width="14" height="14"><circle cx="7" cy="7" r="5.5" fill="#fff" stroke="#333" stroke-width="1"/><circle cx="7" cy="7" r="2.8" fill="#222"/></svg>
<div class="a t " style="left:1821.5px;top:653px;font-size:11px;line-height:16px;height:16px;letter-spacing:-0.734px;">Normom</div>
<div class="a t " style="left:1742.5px;top:702px;font-size:11px;line-height:16px;height:16px;letter-spacing:-0.178px;">Jed. mere</div>
<div class="a " style="left:1796px;top:700px;width:75px;height:26px;background:#fff;border:1px solid #7A7A7A;"></div>
<div class="a t " style="left:1801px;top:702px;font-size:11px;line-height:16px;height:16px;letter-spacing:0.672px;">m³</div>
<div class="a btn" style="left:1872px;top:701px;width:13px;height:18px;"></div>
<div class="a t " style="left:1876.55px;top:703px;font-size:7px;line-height:10px;height:10px;font-weight:bold;">2</div>
<div class="a btn" style="left:1887px;top:701px;width:13px;height:18px;"></div>
<div class="a t " style="left:1891.55px;top:703px;font-size:7px;line-height:10px;height:10px;font-weight:bold;">3</div>
<div class="a t " style="left:1755px;top:732px;font-size:11px;line-height:16px;height:16px;letter-spacing:-0.504px;">Količina</div>
<div class="a " style="left:1796px;top:730px;width:75px;height:26px;background:#fff;border:1px solid #7A7A7A;"></div>
<div class="a t " style="left:1801px;top:732px;font-size:11px;line-height:16px;height:16px;letter-spacing:0.242px;">64,36</div>
<div class="a t " style="left:1743.5px;top:762px;font-size:11px;line-height:16px;height:16px;letter-spacing:-0.15px;">Jed. cena</div>
<div class="a " style="left:1796px;top:760px;width:105px;height:26px;background:#F0F0F0;border:1px solid #7A7A7A;"></div>
<div class="a t " style="left:1801.5px;top:762px;font-size:11px;line-height:16px;height:16px;letter-spacing:0.169px;">490,32</div>
<div class="a t " style="left:1754px;top:792px;font-size:11px;line-height:16px;height:16px;letter-spacing:-0.384px;">Ukupno</div>
<div class="a " style="left:1796px;top:790px;width:105px;height:26px;background:#F0F0F0;border:1px solid #7A7A7A;"></div>
<div class="a t " style="left:1801.5px;top:792px;font-size:11px;line-height:16px;height:16px;letter-spacing:0.195px;">31.556,64</div>
<div class="a " style="left:981px;top:701px;width:410px;height:117px;border-style:solid;border-width:1px;border-color:#A0A0A0 #fff #fff #A0A0A0;"></div>
<div class="a " style="left:982px;top:702px;width:408px;height:115px;border-style:solid;border-width:1px;border-color:#696969 #E3E3E3 #E3E3E3 #696969;background:#F0F0F0;"></div>
<div class="a " style="left:983px;top:703px;width:137px;height:19px;background:#F0F0F0;border-style:solid;border-width:1px;border-color:#fff #696969 #696969 #fff;"></div>
<div class="a t " style="left:987px;top:705px;font-size:11px;line-height:16px;height:16px;letter-spacing:-0.081px;color:#8C8C8C;">Struktura cene</div>
<div class="a " style="left:1120px;top:702px;width:90px;height:20px;background:#F0F0F0;border-style:solid;border-width:1px;border-color:#fff #696969 #696969 #fff;"></div>
<div class="a t " style="left:1130.75px;top:702px;font-size:11px;line-height:18px;height:18px;letter-spacing:0.173px;">Mat. (1,2000)</div>
<div class="a " style="left:1210px;top:702px;width:90px;height:20px;background:#F0F0F0;border-style:solid;border-width:1px;border-color:#fff #696969 #696969 #fff;"></div>
<div class="a t " style="left:1220.25px;top:702px;font-size:11px;line-height:18px;height:18px;letter-spacing:0.103px;">Rad. (1,2000)</div>
<div class="a " style="left:1300px;top:702px;width:90px;height:20px;background:#F0F0F0;border-style:solid;border-width:1px;border-color:#fff #696969 #696969 #fff;"></div>
<div class="a t " style="left:1309.75px;top:702px;font-size:11px;line-height:18px;height:18px;letter-spacing:0.085px;">Meh. (1,2000)</div>
<div class="a " style="left:983px;top:722px;width:137px;height:19px;background:#F0F0F0;border-style:solid;border-width:1px;border-color:#fff #4A4A4A #4A4A4A #fff;"></div>
<div class="a t " style="left:986px;top:724px;font-size:11px;line-height:17px;height:17px;letter-spacing:-0.006px;">Cena (troškovi)</div>
<div class="a " style="left:1120px;top:722px;width:90px;height:19px;background:#F0F0F0;border-right:1px solid #C4C4C4;border-bottom:1px solid #C4C4C4;"></div>
<div class="a t " style="left:1180.21px;top:724px;font-size:11px;line-height:17px;height:17px;letter-spacing:-0.31px;">26,16</div>
<div class="a " style="left:1210px;top:722px;width:90px;height:19px;background:#F0F0F0;border-right:1px solid #C4C4C4;border-bottom:1px solid #C4C4C4;"></div>
<div class="a t " style="left:1276.04px;top:724px;font-size:11px;line-height:17px;height:17px;letter-spacing:-0.321px;">8,60</div>
<div class="a " style="left:1300px;top:722px;width:90px;height:19px;background:#F0F0F0;border-right:1px solid #C4C4C4;border-bottom:1px solid #C4C4C4;"></div>
<div class="a t " style="left:1354.36px;top:724px;font-size:11px;line-height:17px;height:17px;letter-spacing:-0.303px;">373,85</div>
<div class="a " style="left:983px;top:741px;width:137px;height:19px;background:#D6D6FA;border-style:solid;border-width:1px;border-color:#fff #4A4A4A #4A4A4A #fff;"></div>
<div class="a t " style="left:986px;top:743px;font-size:11px;line-height:17px;height:17px;letter-spacing:-0.083px;">Koef. korekcije</div>
<div class="a " style="left:1120px;top:741px;width:90px;height:19px;background:#FFFFFF;border-right:1px solid #C4C4C4;border-bottom:1px solid #C4C4C4;"></div>
<div class="a t " style="left:1174.36px;top:743px;font-size:11px;line-height:17px;height:17px;letter-spacing:-0.303px;">1,0000</div>
<div class="a " style="left:1210px;top:741px;width:90px;height:19px;background:#FFFFFF;border-right:1px solid #C4C4C4;border-bottom:1px solid #C4C4C4;"></div>
<div class="a t " style="left:1264.36px;top:743px;font-size:11px;line-height:17px;height:17px;letter-spacing:-0.303px;">1,0000</div>
<div class="a " style="left:1300px;top:741px;width:90px;height:19px;background:#FFFFFF;border-right:1px solid #C4C4C4;border-bottom:1px solid #C4C4C4;"></div>
<div class="a t " style="left:1354.36px;top:743px;font-size:11px;line-height:17px;height:17px;letter-spacing:-0.303px;">1,0000</div>
<div class="a " style="left:983px;top:760px;width:137px;height:19px;background:#F0F0F0;border-style:solid;border-width:1px;border-color:#fff #4A4A4A #4A4A4A #fff;"></div>
<div class="a t " style="left:986px;top:762px;font-size:11px;line-height:17px;height:17px;letter-spacing:-0.15px;">Cena (zvanična)</div>
<div class="a " style="left:1120px;top:760px;width:90px;height:19px;background:#F0F0F0;border-right:1px solid #C4C4C4;border-bottom:1px solid #C4C4C4;"></div>
<div class="a t " style="left:1180.21px;top:762px;font-size:11px;line-height:17px;height:17px;letter-spacing:-0.31px;">31,39</div>
<div class="a " style="left:1210px;top:760px;width:90px;height:19px;background:#F0F0F0;border-right:1px solid #C4C4C4;border-bottom:1px solid #C4C4C4;"></div>
<div class="a t " style="left:1270.21px;top:762px;font-size:11px;line-height:17px;height:17px;letter-spacing:-0.31px;">10,31</div>
<div class="a " style="left:1300px;top:760px;width:90px;height:19px;background:#F0F0F0;border-right:1px solid #C4C4C4;border-bottom:1px solid #C4C4C4;"></div>
<div class="a t " style="left:1354.36px;top:762px;font-size:11px;line-height:17px;height:17px;letter-spacing:-0.303px;">448,62</div>
<div class="a " style="left:983px;top:779px;width:137px;height:19px;background:#F0F0F0;border-style:solid;border-width:1px;border-color:#fff #4A4A4A #4A4A4A #fff;"></div>
<div class="a t " style="left:986px;top:781px;font-size:11px;line-height:17px;height:17px;letter-spacing:-1.562px;">PDV</div>
<div class="a " style="left:1120px;top:779px;width:90px;height:19px;background:#F0F0F0;border-right:1px solid #C4C4C4;border-bottom:1px solid #C4C4C4;"></div>
<div class="a t " style="left:1186.04px;top:781px;font-size:11px;line-height:17px;height:17px;letter-spacing:-0.321px;">5,65</div>
<div class="a " style="left:1210px;top:779px;width:90px;height:19px;background:#F0F0F0;border-right:1px solid #C4C4C4;border-bottom:1px solid #C4C4C4;"></div>
<div class="a t " style="left:1276.04px;top:781px;font-size:11px;line-height:17px;height:17px;letter-spacing:-0.321px;">1,86</div>
<div class="a " style="left:1300px;top:779px;width:90px;height:19px;background:#F0F0F0;border-right:1px solid #C4C4C4;border-bottom:1px solid #C4C4C4;"></div>
<div class="a t " style="left:1360.21px;top:781px;font-size:11px;line-height:17px;height:17px;letter-spacing:-0.31px;">80,75</div>
<div class="a " style="left:983px;top:798px;width:137px;height:19px;background:#D6FBD6;border-style:solid;border-width:1px;border-color:#fff #4A4A4A #4A4A4A #fff;"></div>
<div class="a t " style="left:986px;top:800px;font-size:11px;line-height:17px;height:17px;letter-spacing:-0.484px;">Ukupno</div>
<div class="a " style="left:1120px;top:798px;width:90px;height:19px;background:#D6FBD6;border-right:1px solid #C4C4C4;border-bottom:1px solid #C4C4C4;"></div>
<div class="a t " style="left:1180.21px;top:800px;font-size:11px;line-height:17px;height:17px;letter-spacing:-0.31px;">37,04</div>
<div class="a " style="left:1210px;top:798px;width:90px;height:19px;background:#D6FBD6;border-right:1px solid #C4C4C4;border-bottom:1px solid #C4C4C4;"></div>
<div class="a t " style="left:1270.21px;top:800px;font-size:11px;line-height:17px;height:17px;letter-spacing:-0.31px;">12,17</div>
<div class="a " style="left:1300px;top:798px;width:90px;height:19px;background:#D6FBD6;border-right:1px solid #C4C4C4;border-bottom:1px solid #C4C4C4;"></div>
<div class="a t " style="left:1354.36px;top:800px;font-size:11px;line-height:17px;height:17px;letter-spacing:-0.303px;">529,37</div>
<div class="a " style="left:980px;top:828px;width:921px;height:138px;border-style:solid;border-width:1px;border-color:#696969 #A0A0A0 #A0A0A0 #696969;background:#F0F0F0;"></div>
<div class="a " style="left:981px;top:829px;width:919px;height:136px;border-style:solid;border-width:1px;border-color:#696969 #F0F0F0 #F0F0F0 #696969;"></div>
<div class="a " style="left:983px;top:831px;width:24px;height:19px;background:#F0F0F0;border-style:solid;border-width:1px;border-color:#fff #696969 #696969 #fff;"></div>
<div class="a " style="left:1007px;top:831px;width:60px;height:19px;background:#F0F0F0;border-style:solid;border-width:1px;border-color:#fff #696969 #696969 #fff;"></div>
<div class="a t " style="left:1019.0px;top:831px;font-size:11px;line-height:17px;height:17px;letter-spacing:-0.156px;">Šifra</div>
<div class="a " style="left:1067px;top:831px;width:60px;height:19px;background:#F0F0F0;border-style:solid;border-width:1px;border-color:#fff #696969 #696969 #fff;"></div>
<div class="a t " style="left:1079.0px;top:831px;font-size:11px;line-height:17px;height:17px;letter-spacing:-0.537px;">Učešće</div>
<div class="a " style="left:1127px;top:831px;width:60px;height:19px;background:#F0F0F0;border-style:solid;border-width:1px;border-color:#fff #696969 #696969 #fff;"></div>
<div class="a t " style="left:1140.25px;top:831px;font-size:11px;line-height:17px;height:17px;letter-spacing:-0.059px;">K.Mat.</div>
<div class="a " style="left:1187px;top:831px;width:60px;height:19px;background:#F0F0F0;border-style:solid;border-width:1px;border-color:#fff #696969 #696969 #fff;"></div>
<div class="a t " style="left:1199.75px;top:831px;font-size:11px;line-height:17px;height:17px;letter-spacing:-0.228px;">K.Rad.</div>
<div class="a " style="left:1247px;top:831px;width:60px;height:19px;background:#F0F0F0;border-style:solid;border-width:1px;border-color:#fff #696969 #696969 #fff;"></div>
<div class="a t " style="left:1259.25px;top:831px;font-size:11px;line-height:17px;height:17px;letter-spacing:-0.272px;">K.Meh.</div>
<div class="a " style="left:1307px;top:831px;width:60px;height:19px;background:#F0F0F0;border-style:solid;border-width:1px;border-color:#fff #696969 #696969 #fff;"></div>
<div class="a t " style="left:1319.5px;top:831px;font-size:11px;line-height:17px;height:17px;letter-spacing:-0.125px;">J.Mere</div>
<div class="a " style="left:1367px;top:831px;width:514px;height:19px;background:#F0F0F0;border-style:solid;border-width:1px;border-color:#fff #696969 #696969 #fff;"></div>
<div class="a t " style="left:1612.75px;top:831px;font-size:11px;line-height:17px;height:17px;letter-spacing:-0.708px;">Opis</div>
<svg class="a" style="left:1050px;top:832px" width="11" height="6"><path d="M0 0 H10 L5 5.5 Z" fill="#000"/></svg>
<div class="a " style="left:983px;top:850px;width:24px;height:19px;background:#F0F0F0;border-style:solid;border-width:1px;border-color:#fff #696969 #696969 #fff;"></div>
<div class="a " style="left:1007px;top:850px;width:60px;height:19px;background:#fff;border-right:1px solid #D0D0D0;border-bottom:1px solid #D0D0D0;"></div>
<div class="a t " style="left:1009.5px;top:851px;font-size:11px;line-height:18px;height:18px;letter-spacing:-0.044px;">000001</div>
<div class="a " style="left:1067px;top:850px;width:60px;height:19px;background:#fff;border-right:1px solid #D0D0D0;border-bottom:1px solid #D0D0D0;"></div>
<div class="a t " style="left:1070.5px;top:851px;font-size:11px;line-height:18px;height:18px;letter-spacing:-0.258px;">1,000</div>
<div class="a " style="left:1127px;top:850px;width:60px;height:19px;background:#fff;border-right:1px solid #D0D0D0;border-bottom:1px solid #D0D0D0;"></div>
<div class="a t " style="left:1130.5px;top:851px;font-size:11px;line-height:18px;height:18px;letter-spacing:-0.231px;">1,0000</div>
<div class="a " style="left:1187px;top:850px;width:60px;height:19px;background:#fff;border-right:1px solid #D0D0D0;border-bottom:1px solid #D0D0D0;"></div>
<div class="a t " style="left:1190.5px;top:851px;font-size:11px;line-height:18px;height:18px;letter-spacing:-0.231px;">1,0000</div>
<div class="a " style="left:1247px;top:850px;width:60px;height:19px;background:#fff;border-right:1px solid #D0D0D0;border-bottom:1px solid #D0D0D0;"></div>
<div class="a t " style="left:1250.5px;top:851px;font-size:11px;line-height:18px;height:18px;letter-spacing:-0.231px;">1,0000</div>
<div class="a " style="left:1307px;top:850px;width:60px;height:19px;background:#fff;border-right:1px solid #D0D0D0;border-bottom:1px solid #D0D0D0;"></div>
<div class="a t " style="left:1309.5px;top:851px;font-size:11px;line-height:18px;height:18px;letter-spacing:0.172px;">m³</div>
<div class="a " style="left:1367px;top:850px;width:514px;height:19px;background:#fff;border-right:1px solid #D0D0D0;border-bottom:1px solid #D0D0D0;"></div>
<div class="a t" style="left:1369.5px;top:851px;font-size:11px;line-height:18px;height:18px;transform:scaleX(0.9252);transform-origin:0 0;">ODVOZ ZEM</div>
<div class="a t" style="left:1430px;top:851px;font-size:11px;line-height:18px;height:18px;transform:scaleX(0.8969);transform-origin:0 0;">LJE VAN GRADILIŠTA NA GRADSKU DEPONIJU</div>
<div class="a " style="left:983px;top:869px;width:24px;height:19px;background:#F0F0F0;border-style:solid;border-width:1px;border-color:#fff #696969 #696969 #fff;"></div>
<div class="a " style="left:1007px;top:869px;width:60px;height:19px;background:#fff;border-right:1px solid #D0D0D0;border-bottom:1px solid #D0D0D0;"></div>
<div class="a t " style="left:1009.5px;top:870px;font-size:11px;line-height:18px;height:18px;letter-spacing:-0.044px;">010108</div>
<div class="a " style="left:1067px;top:869px;width:60px;height:19px;background:#fff;border-right:1px solid #D0D0D0;border-bottom:1px solid #D0D0D0;"></div>
<div class="a t " style="left:1070.5px;top:870px;font-size:11px;line-height:18px;height:18px;letter-spacing:-0.258px;">0,400</div>
<div class="a " style="left:1127px;top:869px;width:60px;height:19px;background:#fff;border-right:1px solid #D0D0D0;border-bottom:1px solid #D0D0D0;"></div>
<div class="a t " style="left:1130.5px;top:870px;font-size:11px;line-height:18px;height:18px;letter-spacing:-0.231px;">1,0000</div>
<div class="a " style="left:1187px;top:869px;width:60px;height:19px;background:#fff;border-right:1px solid #D0D0D0;border-bottom:1px solid #D0D0D0;"></div>
<div class="a t " style="left:1190.5px;top:870px;font-size:11px;line-height:18px;height:18px;letter-spacing:-0.231px;">1,0000</div>
<div class="a " style="left:1247px;top:869px;width:60px;height:19px;background:#fff;border-right:1px solid #D0D0D0;border-bottom:1px solid #D0D0D0;"></div>
<div class="a t " style="left:1250.5px;top:870px;font-size:11px;line-height:18px;height:18px;letter-spacing:-0.231px;">1,0000</div>
<div class="a " style="left:1307px;top:869px;width:60px;height:19px;background:#fff;border-right:1px solid #D0D0D0;border-bottom:1px solid #D0D0D0;"></div>
<div class="a t " style="left:1309.5px;top:870px;font-size:11px;line-height:18px;height:18px;letter-spacing:-0.891px;">kom</div>
<div class="a " style="left:1367px;top:869px;width:514px;height:19px;background:#fff;border-right:1px solid #D0D0D0;border-bottom:1px solid #D0D0D0;"></div>
<div class="a t" style="left:1369.5px;top:870px;font-size:11px;line-height:18px;height:18px;transform:scaleX(0.9381);transform-origin:0 0;">IZRADA KOČ</div>
<div class="a t" style="left:1432px;top:870px;font-size:11px;line-height:18px;height:18px;transform:scaleX(0.9327);transform-origin:0 0;">IĆA OD BUNARSKIH MOTKI.R=10 CM.DUŽINE DO 75 CM.</div>
<div class="a " style="left:983px;top:888px;width:24px;height:19px;background:#F0F0F0;border-style:solid;border-width:1px;border-color:#fff #696969 #696969 #fff;"></div>
<div class="a " style="left:1007px;top:888px;width:60px;height:19px;background:#fff;border-right:1px solid #D0D0D0;border-bottom:1px solid #D0D0D0;"></div>
<div class="a t " style="left:1009.5px;top:889px;font-size:11px;line-height:18px;height:18px;letter-spacing:-0.044px;">025004</div>
<div class="a " style="left:1067px;top:888px;width:60px;height:19px;background:#fff;border-right:1px solid #D0D0D0;border-bottom:1px solid #D0D0D0;"></div>
<div class="a t " style="left:1070.5px;top:889px;font-size:11px;line-height:18px;height:18px;letter-spacing:-0.258px;">1,000</div>
<div class="a " style="left:1127px;top:888px;width:60px;height:19px;background:#fff;border-right:1px solid #D0D0D0;border-bottom:1px solid #D0D0D0;"></div>
<div class="a t " style="left:1130.5px;top:889px;font-size:11px;line-height:18px;height:18px;letter-spacing:-0.231px;">1,0000</div>
<div class="a " style="left:1187px;top:888px;width:60px;height:19px;background:#fff;border-right:1px solid #D0D0D0;border-bottom:1px solid #D0D0D0;"></div>
<div class="a t " style="left:1190.5px;top:889px;font-size:11px;line-height:18px;height:18px;letter-spacing:-0.231px;">1,0000</div>
<div class="a " style="left:1247px;top:888px;width:60px;height:19px;background:#fff;border-right:1px solid #D0D0D0;border-bottom:1px solid #D0D0D0;"></div>
<div class="a t " style="left:1250.5px;top:889px;font-size:11px;line-height:18px;height:18px;letter-spacing:-0.231px;">1,0000</div>
<div class="a " style="left:1307px;top:888px;width:60px;height:19px;background:#fff;border-right:1px solid #D0D0D0;border-bottom:1px solid #D0D0D0;"></div>
<div class="a t " style="left:1309.5px;top:889px;font-size:11px;line-height:18px;height:18px;letter-spacing:0.172px;">m³</div>
<div class="a " style="left:1367px;top:888px;width:514px;height:19px;background:#fff;border-right:1px solid #D0D0D0;border-bottom:1px solid #D0D0D0;"></div>
<div class="a t" style="left:1369.5px;top:889px;font-size:11px;line-height:18px;height:18px;transform:scaleX(0.9259);transform-origin:0 0;">OTKOP HUM</div>
<div class="a t" style="left:1431px;top:889px;font-size:11px;line-height:18px;height:18px;transform:scaleX(0.909);transform-origin:0 0;">USA U SLOJU OD 10–20 CM.BULDOZEROM T.G. 50 SA GURANJEM ZEMLJE DO 20 M.</div>
<div class="a " style="left:983px;top:907px;width:24px;height:19px;background:#F0F0F0;border-style:solid;border-width:1px;border-color:#fff #696969 #696969 #fff;"></div>
<div class="a " style="left:1007px;top:907px;width:60px;height:19px;background:#fff;border-right:1px solid #D0D0D0;border-bottom:1px solid #D0D0D0;"></div>
<div class="a t " style="left:1009.5px;top:908px;font-size:11px;line-height:18px;height:18px;letter-spacing:-0.044px;">025207</div>
<div class="a " style="left:1067px;top:907px;width:60px;height:19px;background:#fff;border-right:1px solid #D0D0D0;border-bottom:1px solid #D0D0D0;"></div>
<div class="a t " style="left:1070.5px;top:908px;font-size:11px;line-height:18px;height:18px;letter-spacing:-0.258px;">1,000</div>
<div class="a " style="left:1127px;top:907px;width:60px;height:19px;background:#fff;border-right:1px solid #D0D0D0;border-bottom:1px solid #D0D0D0;"></div>
<div class="a t " style="left:1130.5px;top:908px;font-size:11px;line-height:18px;height:18px;letter-spacing:-0.231px;">1,0000</div>
<div class="a " style="left:1187px;top:907px;width:60px;height:19px;background:#fff;border-right:1px solid #D0D0D0;border-bottom:1px solid #D0D0D0;"></div>
<div class="a t " style="left:1190.5px;top:908px;font-size:11px;line-height:18px;height:18px;letter-spacing:-0.231px;">1,0000</div>
<div class="a " style="left:1247px;top:907px;width:60px;height:19px;background:#fff;border-right:1px solid #D0D0D0;border-bottom:1px solid #D0D0D0;"></div>
<div class="a t " style="left:1250.5px;top:908px;font-size:11px;line-height:18px;height:18px;letter-spacing:-0.231px;">1,0000</div>
<div class="a " style="left:1307px;top:907px;width:60px;height:19px;background:#fff;border-right:1px solid #D0D0D0;border-bottom:1px solid #D0D0D0;"></div>
<div class="a t " style="left:1309.5px;top:908px;font-size:11px;line-height:18px;height:18px;letter-spacing:0.172px;">m³</div>
<div class="a " style="left:1367px;top:907px;width:514px;height:19px;background:#fff;border-right:1px solid #D0D0D0;border-bottom:1px solid #D0D0D0;"></div>
<div class="a t" style="left:1369.5px;top:908px;font-size:11px;line-height:18px;height:18px;transform:scaleX(0.9768);transform-origin:0 0;">UTOVAR ZE</div>
<div class="a t" style="left:1430px;top:908px;font-size:11px;line-height:18px;height:18px;transform:scaleX(0.9073);transform-origin:0 0;">MLJE 3 KATEGORIJE U MOTORNO VOZILO UTOVARIVAČEM–ZAPREMINA KAŠIKE 2,00 M3</div>
<div class="a " style="left:983px;top:926px;width:24px;height:19px;background:#F0F0F0;border-style:solid;border-width:1px;border-color:#fff #696969 #696969 #fff;"></div>
<div class="a t " style="left:992.66px;top:927px;font-size:12px;line-height:14px;height:14px;">*</div>
<div class="a " style="left:1007px;top:926px;width:60px;height:19px;background:#F0F0F0;border-right:1px solid #C8C8C8;border-bottom:1px solid #C8C8C8;"></div>
<div class="a " style="left:1067px;top:926px;width:60px;height:19px;background:#F0F0F0;border-right:1px solid #C8C8C8;border-bottom:1px solid #C8C8C8;"></div>
<div class="a " style="left:1127px;top:926px;width:60px;height:19px;background:#F0F0F0;border-right:1px solid #C8C8C8;border-bottom:1px solid #C8C8C8;"></div>
<div class="a " style="left:1187px;top:926px;width:60px;height:19px;background:#F0F0F0;border-right:1px solid #C8C8C8;border-bottom:1px solid #C8C8C8;"></div>
<div class="a " style="left:1247px;top:926px;width:60px;height:19px;background:#F0F0F0;border-right:1px solid #C8C8C8;border-bottom:1px solid #C8C8C8;"></div>
<div class="a " style="left:1307px;top:926px;width:60px;height:19px;background:#F0F0F0;border-right:1px solid #C8C8C8;border-bottom:1px solid #C8C8C8;"></div>
<div class="a " style="left:1367px;top:926px;width:514px;height:19px;background:#F0F0F0;border-right:1px solid #C8C8C8;border-bottom:1px solid #C8C8C8;"></div>
<div class="a btn" style="left:981px;top:982px;width:22px;height:24px;"></div>
<div class="a btn" style="left:1011px;top:982px;width:103px;height:24px;"></div>
<div class="a t " style="left:1043px;top:982px;font-size:11px;line-height:24px;height:24px;letter-spacing:-0.398px;">Dodaj normu</div>
<div class="a btnd" style="left:1120px;top:982px;width:103px;height:24px;"></div>
<div class="a t " style="left:1152px;top:982px;font-size:11px;line-height:24px;height:24px;letter-spacing:-0.362px;color:#8E8E8E;">Izbaci normu</div>
<div class="a btnd" style="left:1229px;top:982px;width:103px;height:24px;"></div>
<div class="a t " style="left:1260px;top:982px;font-size:11px;line-height:24px;height:24px;letter-spacing:-0.467px;color:#8E8E8E;">Izmeni normu</div>
<div class="a btn" style="left:1338px;top:982px;width:103px;height:24px;"></div>
<div class="a t " style="left:1369px;top:982px;font-size:11px;line-height:24px;height:24px;letter-spacing:-0.273px;">Analiza cene</div>
<svg class="a" style="left:984px;top:986px" width="16" height="17" viewBox="0 0 16 17"><rect x="2" y=".8" width="11" height="13.6" fill="#EAF2FB" stroke="#7F9DC0" stroke-width=".8"/><rect x="3.6" y="2.6" width="7.8" height="6" fill="#5B9BE0" stroke="#3A74BC" stroke-width=".5"/><path d="M7.5 4 V7 M6 5.6 L7.5 7.2 L9 5.6" stroke="#fff" stroke-width="1" fill="none"/><path d="M4.4 10.6 H10.6 L7.5 15 Z" fill="#3F86DA" stroke="#2A62B0" stroke-width=".5"/></svg>
<svg class="a" style="left:1017px;top:986px" width="16" height="16" viewBox="0 0 16 16"><path d="M5.9 1 H9.1 V5.9 H14 V9.1 H9.1 V14 H5.9 V9.1 H1 V5.9 H5.9 Z" fill="#4CC82A" stroke="#2F9E18" stroke-width="1"/><path d="M6.9 1.9 V6.9 H1.9" fill="none" stroke="#A5EE8A" stroke-width=".9"/></svg>
<svg class="a" style="left:1127px;top:986px" width="14" height="16" viewBox="0 0 14 16"><rect x="4.6" y="0" width="4.6" height="2.6" fill="#9A9A9A"/><rect x="0" y="1.8" width="14" height="2.6" fill="#9A9A9A"/><path d="M.9 5 H13 L12.6 15.8 H1.3 Z" fill="#9A9A9A"/></svg>
<svg class="a" style="left:1235px;top:986px" width="17" height="16" viewBox="0 0 17 16"><path d="M0 0 H16.2 L13.4 4.6 H13 L12.6 15.8 H0 Z" fill="#9A9A9A"/></svg>
<svg class="a" style="left:1344px;top:985px" width="17" height="17" viewBox="0 0 17 17"><rect x="1" y="1" width="14.6" height="14.6" fill="#DDEBFA"/><path d="M1 1 V15.6 H15.6" stroke="#2B4C9A" stroke-width="1.4" fill="none"/><path d="M1.6 9.6 L4 6 L6.4 9.4 L9 5 L11.6 8.4 L15 4.6 V12.6 H1.6 Z" fill="#F0442A"/><path d="M1.6 12 L4.6 10 L7.6 12 L10.6 9.6 L15 11.6 V14.8 H1.6 Z" fill="#FFB21E"/><path d="M2.4 2.4 h2 M6.4 2.4 h2 M10.4 2.4 h2" stroke="#5B9BE0" stroke-width="1.4"/><path d="M1 16.2 h1.6 m1.6 0 h1.6 m1.6 0 h1.6 m1.6 0 h1.6 m1.6 0 h1.6" stroke="#2B4C9A" stroke-width="1"/></svg>
<div class="a btn" style="left:1872px;top:731px;width:27px;height:24px;"></div>
<svg class="a" style="left:1879px;top:735px" width="13" height="16" viewBox="0 0 13 16"><rect x=".6" y=".6" width="11.4" height="14.6" rx="1" fill="#ECECEC" stroke="#8A8A8A" stroke-width=".8"/><rect x="2" y="2" width="8.6" height="3.2" fill="#4F8FE0"/><g fill="#7A7A7A"><rect x="2" y="6.6" width="2" height="1.6"/><rect x="5.3" y="6.6" width="2" height="1.6"/><rect x="2" y="9.2" width="2" height="1.6"/><rect x="5.3" y="9.2" width="2" height="1.6"/><rect x="8.6" y="9.2" width="2" height="1.6"/><rect x="2" y="11.8" width="2" height="1.6"/><rect x="5.3" y="11.8" width="2" height="1.6"/><rect x="8.6" y="11.8" width="2" height="1.6"/></g><rect x="8.6" y="6.6" width="2" height="1.6" fill="#E0523A"/></svg>
<div class="a btn" style="left:1322px;top:1024px;width:22px;height:24px;"></div>
<div class="a btn" style="left:1406px;top:1024px;width:111px;height:24px;"></div>
<div class="a t " style="left:1438.5px;top:1024px;font-size:11px;line-height:24px;height:24px;letter-spacing:-0.23px;">Rekapitulacija</div>
<div class="a btn" style="left:1524px;top:1024px;width:111px;height:24px;"></div>
<div class="a t " style="left:1560px;top:1024px;font-size:11px;line-height:24px;height:24px;letter-spacing:-0.137px;">Specifikacija</div>
<div class="a btn" style="left:1642px;top:1024px;width:111px;height:24px;"></div>
<div class="a t " style="left:1690px;top:1024px;font-size:11px;line-height:24px;height:24px;letter-spacing:-0.383px;">Resursi</div>
<div class="a btn" style="left:1822px;top:1024px;width:85px;height:24px;"></div>
<div class="a t " style="left:1853px;top:1024px;font-size:11px;line-height:24px;height:24px;letter-spacing:-0.203px;">Povratak</div>
<svg class="a" style="left:1325px;top:1028px" width="16" height="16" viewBox="0 0 16 16"><rect x="3.6" y=".8" width="8.8" height="5" fill="#FDFDFD" stroke="#7F9DC0" stroke-width=".7"/><rect x=".8" y="5" width="14.4" height="7" rx="1.4" fill="#5B9BE0" stroke="#2F62A8" stroke-width=".8"/><rect x="2" y="6" width="12" height="2" fill="#A8CDF4"/><rect x="3.6" y="9.6" width="8.8" height="5.2" fill="#fff" stroke="#55708F" stroke-width=".7"/><path d="M5.2 12.4 H10.6" stroke="#7A7A7A" stroke-width=".8"/></svg>
<svg class="a" style="left:1411px;top:1027px" width="17" height="18" viewBox="0 0 17 18"><path d="M4.6 1 H15.4 V14.6 H4.6 Z" fill="#F7F7F7" stroke="#B0B0B0" stroke-width=".8"/><path d="M.8 15 Q4.8 12.6 4.6 16.4 H12.6 Q15.4 16.4 15.4 14" fill="#EFEFEF" stroke="#B0B0B0" stroke-width=".8"/><path d="M6.4 3.4 h1 m1 0 h1 m1 0 h1" stroke="#E8B020" stroke-width="1"/><path d="M6.4 6 H13.6 M6.4 8 H13.6 M6.4 10 H13.6 M6.4 12 H13.6" stroke="#BDBDBD" stroke-width=".8"/></svg>
<svg class="a" style="left:1529px;top:1027px" width="18" height="18" viewBox="0 0 18 18"><path d="M.8 4.2 H3 L5 12.6 H13.6" fill="none" stroke="#7A7A7A" stroke-width="1"/><path d="M3.6 5 H15.4 L13.8 10.6 H5 Z" fill="#E6E6E6" stroke="#8A8A8A" stroke-width=".8"/><path d="M6.4 5 V10.6 M9 5 V10.6 M11.6 5 V10.6 M4.2 7.6 H14.6" stroke="#8A8A8A" stroke-width=".6"/><circle cx="6.2" cy="14.8" r="1.3" fill="#9A9A9A" stroke="#555" stroke-width=".5"/><circle cx="12.4" cy="14.8" r="1.3" fill="#9A9A9A" stroke="#555" stroke-width=".5"/><path d="M15.4 2 L16.4 3" stroke="#E02020" stroke-width="1.6"/></svg>
<svg class="a" style="left:1648px;top:1031px" width="16.2" height="12.6" viewBox="0 0 18 14"><rect x="6.4" y="1.4" width="11" height="8.4" fill="#168A16" stroke="#0C5E0C" stroke-width=".5"/><path d="M1 10 V7.4 L3.2 4 H6.4 V10 Z" fill="#4A4A4A"/><path d="M2.4 7 L3.8 4.8 H5.4 V7 Z" fill="#B8C8D8"/><rect x=".6" y="9.4" width="16.8" height="1.4" fill="#2A2A2A"/><circle cx="3.8" cy="10.8" r="1.7" fill="#1A1A1A"/><circle cx="13.8" cy="10.8" r="1.7" fill="#1A1A1A"/></svg>
<svg class="a" style="left:1828px;top:1027px" width="17" height="17" viewBox="0 0 17 17"><path d="M1 8.6 L8.5 1.4 L16 8.6" fill="none" stroke="#6A6A6A" stroke-width="1.6"/><path d="M3.4 8 V15.6 H13.6 V8 L8.5 3.2 Z" fill="#FAFAFA" stroke="#9A9A9A" stroke-width=".7"/><rect x="7" y="10" width="3" height="5.6" fill="#E05A1A" stroke="#A03A0A" stroke-width=".5"/></svg>
<div class="a " style="left:0px;top:1061px;width:1920px;height:1px;background:#A0A0A0;"></div>
<div class="a " style="left:0px;top:1062px;width:1px;height:16px;background:#A0A0A0;"></div>
<div class="a " style="left:0px;top:1062px;width:1920px;height:16px;background:#fff;"></div>
<div class="a " style="left:0px;top:1078px;width:1920px;height:2px;background:#3C3C3C;"></div>
<div class="a " style="left:48px;top:1078px;width:344px;height:2px;background:#C8C8C8;"></div>
<div class="a t " style="left:2px;top:1064px;font-size:12px;line-height:17px;height:17px;letter-spacing:-0.178px;">Brsjacka 3-Analiza.nbi</div>
<div class="a t " style="left:1214.5px;top:1064px;font-size:12px;line-height:17px;height:17px;letter-spacing:-0.004px;">Nije ugovoren</div>
<div class="a t " style="left:1764.5px;top:1064px;font-size:12px;line-height:17px;height:17px;letter-spacing:-0.412px;">Četvrtak, 05.03.2020.</div>
<div class="a " style="left:1210px;top:1063px;width:1px;height:15px;background:#D7D7D7;"></div>
<div class="a " style="left:1339px;top:1063px;width:1px;height:15px;background:#D7D7D7;"></div>
<div class="a " style="left:1480px;top:1063px;width:1px;height:15px;background:#D7D7D7;"></div>
<div class="a " style="left:1619px;top:1063px;width:1px;height:15px;background:#D7D7D7;"></div>
<div class="a " style="left:1759px;top:1063px;width:1px;height:15px;background:#D7D7D7;"></div>
</div>
</body></html>
